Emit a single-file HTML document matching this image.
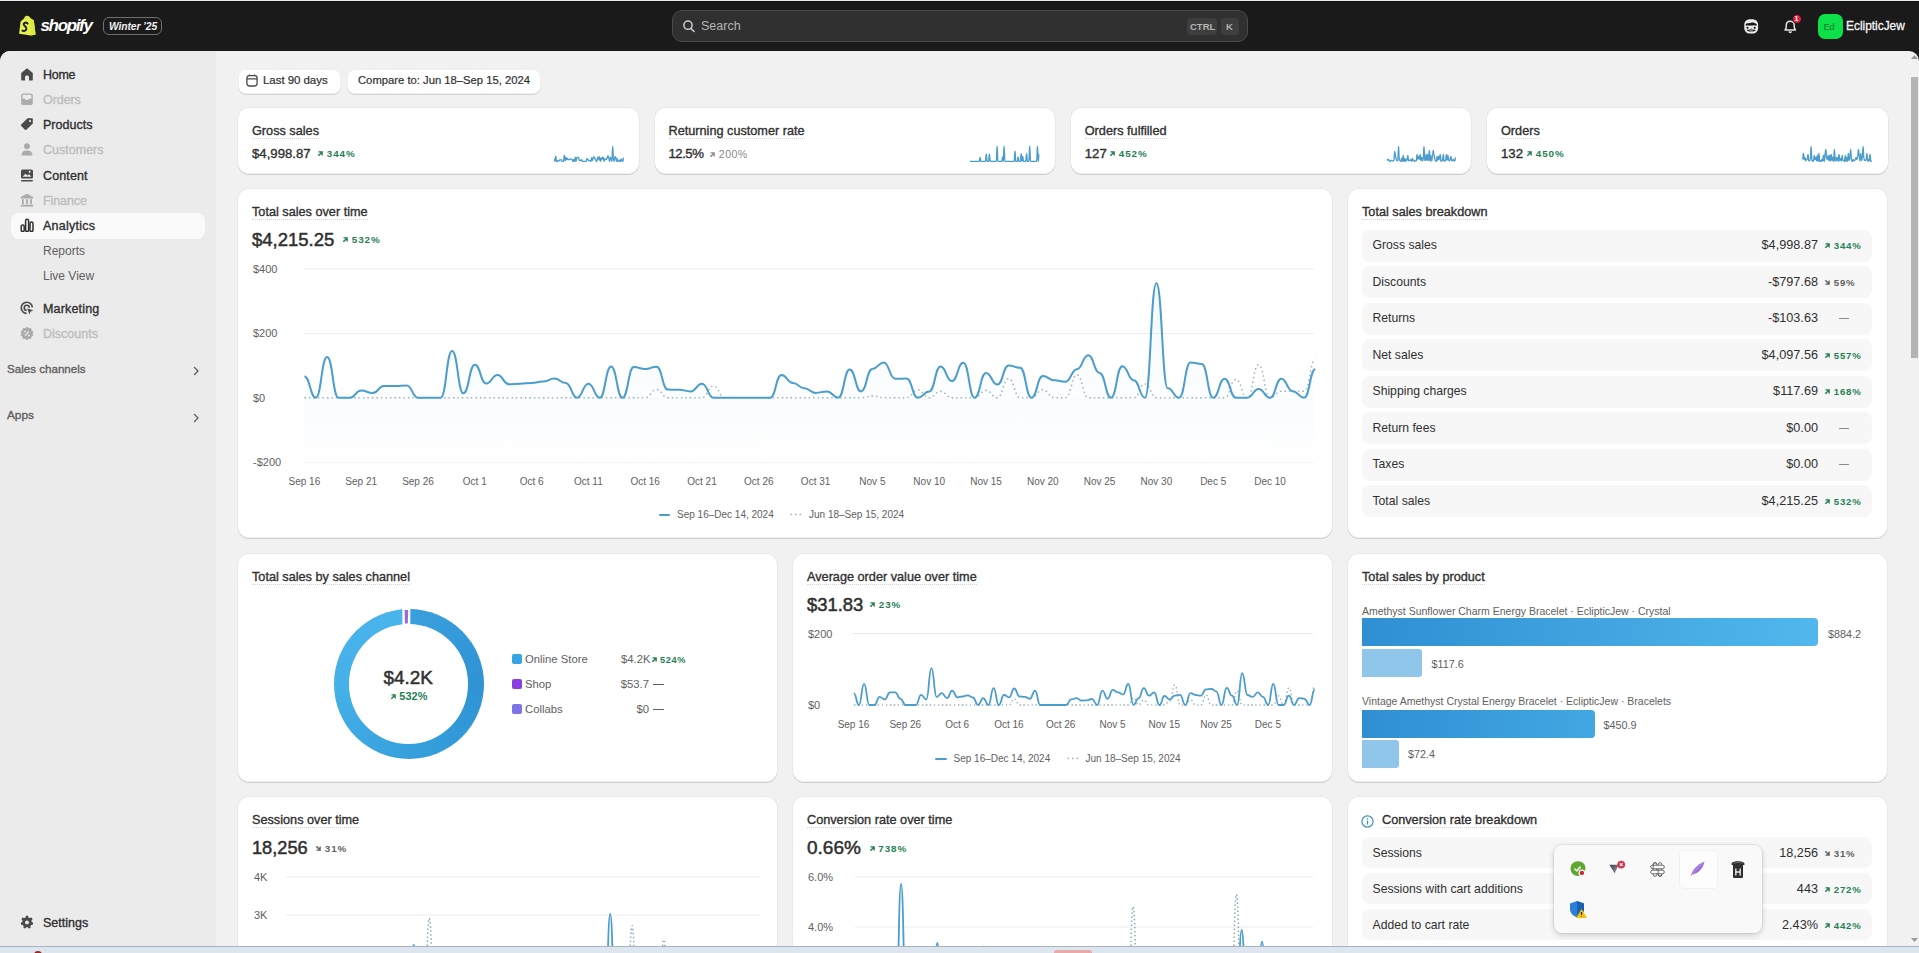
<!DOCTYPE html><html><head><meta charset="utf-8"><style>
*{margin:0;padding:0;box-sizing:border-box}
html,body{width:1919px;height:953px;overflow:hidden;background:#1a1a1a;font-family:"Liberation Sans",sans-serif;color:#303030}
.t{position:absolute;white-space:nowrap}
.abs{position:absolute}
.card{position:absolute;background:#fff;border-radius:11px;box-shadow:0 1px 0 0 rgba(26,26,26,0.12),inset 0 -1px 0 0 rgba(0,0,0,0.05),0 0 0 1px rgba(0,0,0,0.035)}
.ttl{position:absolute;white-space:nowrap;font-weight:400;font-size:12.7px;-webkit-text-stroke:0.35px #303030;color:#303030;line-height:13px;margin-top:2.5px;border-bottom:1px dotted #d4d4d4;padding-bottom:0px}
.row{position:absolute;background:#f7f7f7;border-radius:8px}
</style></head><body>

<div class="abs" style="left:0;top:0;width:1919px;height:1px;background:#eeecf0"></div>
<div class="abs" style="left:0;top:1px;width:1919px;height:1px;background:#111014"></div>
<div class="abs" style="left:0;top:2px;width:1919px;height:49px;background:#1a1a1a"></div>
<svg class="abs" style="left:0;top:0" width="40" height="40" viewBox="0 0 40 40">
<path d="M19.1 33.8 L20.6 21.4 L23.8 18.8 C24.6 16.8 25.6 15.8 26.8 15.8 C28.4 15.8 29.6 16.6 30.3 17.9 L33.8 20.5 L35.6 34.4 L30.9 35.4 Z" fill="#e6f050"/>
<path d="M30.3 17.9 L33.8 20.5 L35.6 34.4 L30.9 35.4 Z" fill="#dbe83e"/>
<path d="M27.6 23.6 C27 22.6 25.6 22.3 24.6 22.8 C23.4 23.4 23.4 24.8 24.4 25.6 C25.4 26.4 26.6 27 26.4 28.8 C26.2 30.6 24.2 31.4 22.4 30.6" stroke="#1a1a1a" stroke-width="1.9" fill="none" stroke-linecap="round"/>
<path d="M25 18.6 C25.6 17.4 26.6 17.2 27.6 17.8" stroke="#b9c632" stroke-width="0.8" fill="none"/>
</svg>
<div class="t" style="left:40.5px;top:15.3px;font-size:17px;font-weight:700;color:#fff;line-height:22px;font-style:italic;letter-spacing:-1.35px">shopify</div>
<div class="abs" style="left:103px;top:17px;width:59px;height:18px;border:1px solid #6f6f6f;border-radius:6px"></div>
<div class="t" style="left:109px;top:19.0px;font-size:10.3px;font-weight:700;color:#f0f0f0;line-height:16px;font-style:italic;letter-spacing:-0.1px">Winter ’25</div>
<div class="abs" style="left:672px;top:10px;width:576px;height:32px;background:#303030;border:1px solid #4a4a4a;border-radius:10px"></div>
<svg class="abs" style="left:683px;top:20px" width="12" height="13" viewBox="0 0 12 13"><circle cx="5" cy="5.2" r="4.1" stroke="#cfcfcf" stroke-width="1.5" fill="none"/><path d="M8 8.4 L11 11.5" stroke="#cfcfcf" stroke-width="1.5" stroke-linecap="round"/></svg>
<div class="t" style="left:701px;top:18.0px;font-size:12.5px;font-weight:400;color:#b5b5b5;line-height:16px;">Search</div>
<div class="abs" style="left:1187px;top:18px;width:30px;height:17px;background:#3e3e3e;border-radius:4px"></div>
<div class="t" style="left:1190px;top:18.5px;font-size:9.5px;font-weight:700;color:#b5b5b5;line-height:16px;">CTRL</div>
<div class="abs" style="left:1221px;top:18px;width:18px;height:17px;background:#3e3e3e;border-radius:4px"></div>
<div class="t" style="left:1226px;top:18.5px;font-size:9.5px;font-weight:700;color:#b5b5b5;line-height:16px;">K</div>
<svg class="abs" style="left:1744px;top:18.5px" width="15" height="15" viewBox="0 0 15 15">
<rect x="0.3" y="0.3" width="13.8" height="14.2" rx="5.2" fill="#ededed"/>
<path d="M1.6 5.2 C3.6 3.6 5.4 4.6 7.2 3.8 C9 3.2 10.8 4 12.8 5.2 L12.6 6.8 C10.6 5.8 9 6.2 7.2 6.6 C5.4 7 3.6 6 1.8 6.8 Z" fill="#1a1a1a"/>
<circle cx="3.5" cy="8.8" r="1.1" fill="#1a1a1a"/><circle cx="10.7" cy="8.8" r="1.1" fill="#1a1a1a"/>
<path d="M6.4 10.2 L7.2 9.2 L8 10.2 Z" fill="#1a1a1a"/>
<path d="M2.6 11.2 C4.6 10.4 9.8 10.4 11.8 11.2 C10.8 13 3.6 13 2.6 11.2 Z" fill="#1a1a1a"/>
<path d="M5.2 11.6 C6.4 11.3 8 11.3 9.2 11.6 C8.4 12.3 6 12.3 5.2 11.6 Z" fill="#ededed"/>
</svg>
<svg class="abs" style="left:1782px;top:17px" width="17" height="17" viewBox="0 0 17 17">
<path d="M3 13 H13.5 C12.6 12 12.2 11 12.2 9.2 V8.2 C12.2 5.8 10.6 4.2 8.2 4.2 C5.8 4.2 4.3 5.8 4.3 8.2 V9.2 C4.3 11 3.9 12 3 13 Z" stroke="#e3e3e3" stroke-width="1.5" fill="none" stroke-linejoin="round"/>
<path d="M6.8 14.6 Q8.2 16.2 9.6 14.6" stroke="#e3e3e3" stroke-width="1.5" fill="none"/></svg>
<div class="abs" style="left:1792px;top:14px;width:10px;height:10px;background:#e51c3e;border-radius:50%;border:1px solid #1a1a1a"></div>
<div class="t" style="left:1794.5px;top:14.0px;font-size:7px;font-weight:700;color:#fff;line-height:10px;">1</div>
<div class="abs" style="left:1818px;top:14px;width:25px;height:25px;background:#0ee04a;border-radius:7px"></div>
<div class="t" style="left:1823.5px;top:20.5px;font-size:9px;font-weight:400;color:#0b7a2c;line-height:12px;">Ed</div>
<div class="t" style="left:1846px;top:18.0px;font-size:11.9px;font-weight:400;color:#f3f3f3;line-height:16px;-webkit-text-stroke:0.3px #f3f3f3;">EclipticJew</div>
<div class="abs" style="left:0;top:51px;width:1919px;height:895px;background:#f1f1f1;border-radius:10px 10px 0 0;overflow:hidden">
<div class="abs" style="left:0;top:0;width:216px;height:895px;background:#ebebeb"></div>
</div>
<div class="abs" style="left:11px;top:213px;width:194px;height:26px;background:#fafafa;border-radius:8px"></div>
<svg class="abs" style="left:20px;top:67.0px" width="14" height="14" viewBox="0 0 14 14"><path d="M7 1.2 L12.8 6 V12.6 C12.8 13.2 12.4 13.6 11.8 13.6 H9 V10 C9 9 8.2 8.4 7 8.4 C5.8 8.4 5 9 5 10 V13.6 H2.2 C1.6 13.6 1.2 13.2 1.2 12.6 V6 Z" fill="#4a4a4a"/></svg>
<div class="t" style="left:43px;top:66.9px;font-size:12.5px;font-weight:400;color:#303030;line-height:16px;-webkit-text-stroke:0.35px #303030;letter-spacing:-0.26px">Home</div>
<svg class="abs" style="left:20px;top:92.0px" width="14" height="14" viewBox="0 0 14 14"><rect x="1.2" y="1.5" width="11.6" height="11.6" rx="2.2" fill="#ababab"/><path d="M2.6 6.8 H5 L6 8 H8 L9 6.8 H11.4 V3.6 C11.4 3.1 11 2.8 10.6 2.8 H3.4 C3 2.8 2.6 3.1 2.6 3.6 Z" fill="#ebebeb"/></svg>
<div class="t" style="left:43px;top:91.9px;font-size:12.5px;font-weight:400;color:#bdbdbd;line-height:16px;-webkit-text-stroke:0.35px #bdbdbd;letter-spacing:-0.07px">Orders</div>
<svg class="abs" style="left:20px;top:117.0px" width="14" height="14" viewBox="0 0 14 14"><path d="M7.6 1.2 H12 C12.5 1.2 12.8 1.5 12.8 2 V6.4 L6.4 12.8 C6 13.2 5.4 13.2 5 12.8 L1.2 9 C0.8 8.6 0.8 8 1.2 7.6 Z" fill="#4a4a4a"/><circle cx="10" cy="4" r="1.1" fill="#ebebeb"/></svg>
<div class="t" style="left:43px;top:116.9px;font-size:12.5px;font-weight:400;color:#303030;line-height:16px;-webkit-text-stroke:0.35px #303030;letter-spacing:0.02px">Products</div>
<svg class="abs" style="left:20px;top:142.0px" width="14" height="14" viewBox="0 0 14 14"><circle cx="7" cy="4.2" r="3" fill="#ababab"/><path d="M1.6 13.4 C1.6 9.8 4 8.6 7 8.6 C10 8.6 12.4 9.8 12.4 13.4 Z" fill="#ababab"/></svg>
<div class="t" style="left:43px;top:141.9px;font-size:12.5px;font-weight:400;color:#bdbdbd;line-height:16px;-webkit-text-stroke:0.35px #bdbdbd;letter-spacing:0.01px">Customers</div>
<svg class="abs" style="left:20px;top:168.0px" width="14" height="14" viewBox="0 0 14 14"><rect x="1" y="1.5" width="12" height="9" rx="1.6" fill="#4a4a4a"/><path d="M2.6 8.8 L5.4 5.8 L7.4 7.6 L9 6.2 L11.4 8.8 Z" fill="#ebebeb"/><circle cx="9.6" cy="3.8" r="1" fill="#ebebeb"/><rect x="1" y="12" width="12" height="1.6" rx="0.8" fill="#4a4a4a"/></svg>
<div class="t" style="left:43px;top:167.9px;font-size:12.5px;font-weight:400;color:#303030;line-height:16px;-webkit-text-stroke:0.35px #303030;letter-spacing:0.12px">Content</div>
<svg class="abs" style="left:20px;top:193.0px" width="14" height="14" viewBox="0 0 14 14"><path d="M7 0.8 L13.2 4 V5.4 H0.8 V4 Z" fill="#ababab"/><rect x="2" y="6.2" width="1.8" height="5" fill="#ababab"/><rect x="6.1" y="6.2" width="1.8" height="5" fill="#ababab"/><rect x="10.2" y="6.2" width="1.8" height="5" fill="#ababab"/><rect x="0.8" y="11.8" width="12.4" height="1.8" fill="#ababab"/></svg>
<div class="t" style="left:43px;top:192.9px;font-size:12.5px;font-weight:400;color:#bdbdbd;line-height:16px;-webkit-text-stroke:0.35px #bdbdbd;letter-spacing:-0.1px">Finance</div>
<svg class="abs" style="left:20px;top:218.0px" width="14" height="14" viewBox="0 0 14 14"><rect x="1.2" y="7" width="3" height="6.6" rx="1.5" stroke="#303030" stroke-width="1.5" fill="none"/><rect x="5.6" y="1.2" width="3" height="12.4" rx="1.5" stroke="#303030" stroke-width="1.5" fill="none"/><rect x="10" y="4" width="3" height="9.6" rx="1.5" stroke="#303030" stroke-width="1.5" fill="none"/></svg>
<div class="t" style="left:43px;top:217.9px;font-size:12.5px;font-weight:400;color:#303030;line-height:16px;-webkit-text-stroke:0.35px #303030;letter-spacing:0.26px">Analytics</div>
<div class="t" style="left:43px;top:242.5px;font-size:12px;font-weight:400;color:#616161;line-height:16px;">Reports</div>
<div class="t" style="left:43px;top:267.5px;font-size:12px;font-weight:400;color:#616161;line-height:16px;">Live View</div>
<svg class="abs" style="left:20px;top:301.0px" width="14" height="14" viewBox="0 0 14 14"><path d="M12.4 6.4 A5.6 5.6 0 1 0 6.6 12.4" stroke="#4a4a4a" stroke-width="1.6" fill="none"/><path d="M9.4 6.6 A2.6 2.6 0 1 0 6.6 9.4" stroke="#4a4a4a" stroke-width="1.6" fill="none"/><path d="M7.2 7.2 L13.4 9.4 L10.6 10.6 L9.4 13.4 Z" fill="#4a4a4a"/></svg>
<div class="t" style="left:43px;top:301.2px;font-size:12.5px;font-weight:400;color:#303030;line-height:16px;-webkit-text-stroke:0.35px #303030;letter-spacing:0.17px">Marketing</div>
<svg class="abs" style="left:20px;top:326.0px" width="14" height="14" viewBox="0 0 14 14"><path d="M7 0.8 L8.8 2.2 L11 2 L11.6 4.2 L13.4 5.6 L12.6 7.6 L13.4 9.6 L11.6 10.8 L11 13 L8.8 12.8 L7 14.2 L5.2 12.8 L3 13 L2.4 10.8 L0.6 9.6 L1.4 7.6 L0.6 5.6 L2.4 4.2 L3 2 L5.2 2.2 Z" fill="#ababab"/><path d="M5 9.6 L9 5.4" stroke="#ebebeb" stroke-width="1.3"/><circle cx="5.2" cy="5.6" r="0.9" fill="#ebebeb"/><circle cx="8.8" cy="9.4" r="0.9" fill="#ebebeb"/></svg>
<div class="t" style="left:43px;top:326.2px;font-size:12.5px;font-weight:400;color:#bdbdbd;line-height:16px;-webkit-text-stroke:0.35px #bdbdbd;">Discounts</div>
<div class="t" style="left:7px;top:361.0px;font-size:11.6px;font-weight:400;color:#616161;line-height:16px;-webkit-text-stroke:0.35px #616161;">Sales channels</div>
<div class="t" style="left:7px;top:407.0px;font-size:11.8px;font-weight:400;color:#616161;line-height:16px;-webkit-text-stroke:0.35px #616161;">Apps</div>
<svg class="abs" style="left:192px;top:366px" width="8" height="10" viewBox="0 0 8 10"><path d="M2.5 1.5 L6 5 L2.5 8.5" stroke="#616161" stroke-width="1.4" fill="none" stroke-linecap="round" stroke-linejoin="round"/></svg>
<svg class="abs" style="left:192px;top:413px" width="8" height="10" viewBox="0 0 8 10"><path d="M2.5 1.5 L6 5 L2.5 8.5" stroke="#616161" stroke-width="1.4" fill="none" stroke-linecap="round" stroke-linejoin="round"/></svg>
<svg class="abs" style="left:20px;top:915.0px" width="14" height="14" viewBox="0 0 14 14"><path d="M6 0.8 H8 L8.4 2.4 L9.8 3.1 L11.4 2.5 L12.6 4.2 L11.5 5.5 L11.6 7 L13.2 7.8 L12.8 9.8 L11.2 10 L10.3 11.2 L10.6 12.9 L8.8 13.6 L7.8 12.3 H6.2 L5.2 13.6 L3.4 12.9 L3.7 11.2 L2.8 10 L1.2 9.8 L0.8 7.8 L2.4 7 L2.5 5.5 L1.4 4.2 L2.6 2.5 L4.2 3.1 L5.6 2.4 Z" fill="#4a4a4a"/><circle cx="7" cy="7.4" r="1.9" fill="#ebebeb"/></svg>
<div class="t" style="left:43px;top:915.2px;font-size:12.5px;font-weight:400;color:#303030;line-height:16px;-webkit-text-stroke:0.35px #303030;">Settings</div>
<div class="abs" style="left:238px;top:69px;width:102.5px;height:25px;background:#fff;border-radius:8px;box-shadow:0 1px 0 0 rgba(0,0,0,0.12), inset 0 0 0 1px rgba(0,0,0,0.06)"></div>
<svg class="abs" style="left:246px;top:74px" width="12" height="13" viewBox="0 0 12 13"><rect x="0.9" y="1.6" width="10.2" height="10.4" rx="2.4" stroke="#4a4a4a" stroke-width="1.3" fill="none"/><path d="M1 4.8 H11 M3.4 0.6 V2 M8.6 0.6 V2" stroke="#4a4a4a" stroke-width="1.3"/></svg>
<div class="t" style="left:263px;top:71.8px;font-size:11.5px;font-weight:400;color:#303030;line-height:16px;-webkit-text-stroke:0.2px #303030;letter-spacing:-0.05px">Last 90 days</div>
<div class="abs" style="left:347.2px;top:69px;width:193.5px;height:25px;background:#fff;border-radius:8px;box-shadow:0 1px 0 0 rgba(0,0,0,0.12), inset 0 0 0 1px rgba(0,0,0,0.06)"></div>
<div class="t" style="left:358px;top:71.8px;font-size:11.25px;font-weight:400;color:#303030;line-height:16px;-webkit-text-stroke:0.2px #303030;">Compare to: Jun 18–Sep 15, 2024</div>
<div class="card" style="left:238px;top:108px;width:400.5px;height:66px"></div>
<div class="ttl" style="left:252px;top:122px">Gross sales</div>
<div class="t" style="left:252px;top:145.5px;font-size:13.2px;font-weight:400;color:#303030;line-height:16px;-webkit-text-stroke:0.35px #303030;">$4,998.87</div>
<div class="card" style="left:654.5px;top:108px;width:400.5px;height:66px"></div>
<div class="ttl" style="left:668.5px;top:122px">Returning customer rate</div>
<div class="t" style="left:668.5px;top:145.5px;font-size:13.2px;font-weight:400;color:#303030;line-height:16px;-webkit-text-stroke:0.35px #303030;letter-spacing:-0.5px">12.5%</div>
<div class="card" style="left:1070.75px;top:108px;width:400.5px;height:66px"></div>
<div class="ttl" style="left:1084.75px;top:122px">Orders fulfilled</div>
<div class="t" style="left:1084.75px;top:145.5px;font-size:13.2px;font-weight:400;color:#303030;line-height:16px;-webkit-text-stroke:0.35px #303030;">127</div>
<div class="card" style="left:1487px;top:108px;width:400.5px;height:66px"></div>
<div class="ttl" style="left:1501px;top:122px">Orders</div>
<div class="t" style="left:1501px;top:145.5px;font-size:13.2px;font-weight:400;color:#303030;line-height:16px;-webkit-text-stroke:0.35px #303030;">132</div>
<div class="t" style="left:318px;top:146.1px;font-size:9.8px;font-weight:700;color:#1f7f52;line-height:16px;letter-spacing:0.95px"><svg width="5" height="5" viewBox="0 0 5 5" style="margin-right:3.8px;vertical-align:1px"><path d="M0.8 4.3 L3.9 1.2 M1.2 0.9 H4.1 V3.8" stroke="currentColor" stroke-width="1.4" fill="none" stroke-linecap="square"/></svg>344%</div>
<div class="t" style="left:710px;top:146.3px;font-size:10.6px;font-weight:400;color:#8a8a8a;line-height:16px;letter-spacing:0.45px"><svg width="5" height="5" viewBox="0 0 5 5" style="margin-right:3.8px;vertical-align:1px"><path d="M0.8 4.3 L3.9 1.2 M1.2 0.9 H4.1 V3.8" stroke="currentColor" stroke-width="1.4" fill="none" stroke-linecap="square"/></svg>200%</div>
<div class="t" style="left:1110px;top:146.1px;font-size:9.8px;font-weight:700;color:#1f7f52;line-height:16px;letter-spacing:0.95px"><svg width="5" height="5" viewBox="0 0 5 5" style="margin-right:3.8px;vertical-align:1px"><path d="M0.8 4.3 L3.9 1.2 M1.2 0.9 H4.1 V3.8" stroke="currentColor" stroke-width="1.4" fill="none" stroke-linecap="square"/></svg>452%</div>
<div class="t" style="left:1527px;top:146.1px;font-size:9.8px;font-weight:700;color:#1f7f52;line-height:16px;letter-spacing:0.95px"><svg width="5" height="5" viewBox="0 0 5 5" style="margin-right:3.8px;vertical-align:1px"><path d="M0.8 4.3 L3.9 1.2 M1.2 0.9 H4.1 V3.8" stroke="currentColor" stroke-width="1.4" fill="none" stroke-linecap="square"/></svg>450%</div>
<svg class="abs" style="left:0;top:0;overflow:visible" width="1" height="1"><path d="M554.2,158.6C554.6,158.6 554.6,161.4 555.0,161.4C555.4,161.4 555.4,156.1 555.8,156.1C556.1,156.1 556.1,161.4 556.5,161.4C556.9,161.4 556.9,161.4 557.3,161.4C557.7,161.4 557.7,160.5 558.1,160.5C558.5,160.5 558.5,160.8 558.9,160.8C559.3,160.8 559.3,159.9 559.7,159.9C560.0,159.9 560.0,159.9 560.4,159.9C560.8,159.9 560.8,159.8 561.2,159.8C561.6,159.8 561.6,161.4 562.0,161.4C562.4,161.4 562.4,161.4 562.8,161.4C563.2,161.4 563.2,161.4 563.6,161.4C563.9,161.4 563.9,155.3 564.3,155.3C564.7,155.3 564.7,160.8 565.1,160.8C565.5,160.8 565.5,157.1 565.9,157.1C566.3,157.1 566.3,159.5 566.7,159.5C567.1,159.5 567.1,158.4 567.5,158.4C567.8,158.4 567.8,159.6 568.2,159.6C568.6,159.6 568.6,159.6 569.0,159.6C569.4,159.6 569.4,159.5 569.8,159.5C570.2,159.5 570.2,159.3 570.6,159.3C571.0,159.3 571.0,158.9 571.4,158.9C571.7,158.9 571.7,159.5 572.1,159.5C572.5,159.5 572.5,161.4 572.9,161.4C573.3,161.4 573.3,159.6 573.7,159.6C574.1,159.6 574.1,161.4 574.5,161.4C574.9,161.4 574.9,157.3 575.3,157.3C575.6,157.3 575.6,161.4 576.0,161.4C576.4,161.4 576.4,157.4 576.8,157.4C577.2,157.4 577.2,157.6 577.6,157.6C578.0,157.6 578.0,157.4 578.4,157.4C578.8,157.4 578.8,160.3 579.2,160.3C579.5,160.3 579.5,160.4 579.9,160.4C580.3,160.4 580.3,160.6 580.7,160.6C581.1,160.6 581.1,159.6 581.5,159.6C581.9,159.6 581.9,161.4 582.3,161.4C582.7,161.4 582.7,161.4 583.1,161.4C583.4,161.4 583.4,161.4 583.8,161.4C584.2,161.4 584.2,161.4 584.6,161.4C585.0,161.4 585.0,161.4 585.4,161.4C585.8,161.4 585.8,161.4 586.2,161.4C586.6,161.4 586.6,158.4 587.0,158.4C587.3,158.4 587.3,159.5 587.7,159.5C588.1,159.5 588.1,160.2 588.5,160.2C588.9,160.2 588.9,160.8 589.3,160.8C589.7,160.8 589.7,160.6 590.1,160.6C590.5,160.6 590.5,161.4 590.8,161.4C591.2,161.4 591.2,157.7 591.6,157.7C592.0,157.7 592.0,160.6 592.4,160.6C592.8,160.6 592.8,157.6 593.2,157.6C593.6,157.6 593.6,156.8 594.0,156.8C594.4,156.8 594.4,158.9 594.7,158.9C595.1,158.9 595.1,158.9 595.5,158.9C595.9,158.9 595.9,161.4 596.3,161.4C596.7,161.4 596.7,160.6 597.1,160.6C597.5,160.6 597.5,157.3 597.9,157.3C598.3,157.3 598.3,159.2 598.6,159.2C599.0,159.2 599.0,156.8 599.4,156.8C599.8,156.8 599.8,161.4 600.2,161.4C600.6,161.4 600.6,158.2 601.0,158.2C601.4,158.2 601.4,159.7 601.8,159.7C602.2,159.7 602.2,157.2 602.5,157.2C602.9,157.2 602.9,157.5 603.3,157.5C603.7,157.5 603.7,161.4 604.1,161.4C604.5,161.4 604.5,158.6 604.9,158.6C605.3,158.6 605.3,159.1 605.7,159.1C606.1,159.1 606.1,159.3 606.4,159.3C606.8,159.3 606.8,157.7 607.2,157.7C607.6,157.7 607.6,155.8 608.0,155.8C608.4,155.8 608.4,158.2 608.8,158.2C609.2,158.2 609.2,161.4 609.6,161.4C610.0,161.4 610.0,157.3 610.3,157.3C610.7,157.3 610.7,159.1 611.1,159.1C611.5,159.1 611.5,161.4 611.9,161.4C612.3,161.4 612.3,146.4 612.7,146.4C613.1,146.4 613.1,160.2 613.5,160.2C613.9,160.2 613.9,161.4 614.2,161.4C614.6,161.4 614.6,156.8 615.0,156.8C615.4,156.8 615.4,157.0 615.8,157.0C616.2,157.0 616.2,161.4 616.6,161.4C617.0,161.4 617.0,158.9 617.4,158.9C617.8,158.9 617.8,161.4 618.1,161.4C618.5,161.4 618.5,161.4 618.9,161.4C619.3,161.4 619.3,160.3 619.7,160.3C620.1,160.3 620.1,161.4 620.5,161.4C620.9,161.4 620.9,158.9 621.3,158.9C621.7,158.9 621.7,160.5 622.0,160.5C622.4,160.5 622.4,161.4 622.8,161.4C623.2,161.4 623.2,157.7 623.6,157.7" stroke="#4b9dcd" stroke-width="1.4" fill="none"/></svg>
<svg class="abs" style="left:0;top:0;overflow:visible" width="1" height="1"><path d="M970.0,161.4C970.4,161.4 970.4,161.4 970.8,161.4C971.2,161.4 971.2,161.4 971.6,161.4C971.9,161.4 971.9,161.4 972.3,161.4C972.7,161.4 972.7,161.4 973.1,161.4C973.5,161.4 973.5,161.4 973.9,161.4C974.3,161.4 974.3,161.4 974.7,161.4C975.0,161.4 975.0,161.4 975.4,161.4C975.8,161.4 975.8,161.4 976.2,161.4C976.6,161.4 976.6,161.4 977.0,161.4C977.4,161.4 977.4,161.4 977.8,161.4C978.1,161.4 978.1,161.4 978.5,161.4C978.9,161.4 978.9,161.4 979.3,161.4C979.7,161.4 979.7,157.4 980.1,157.4C980.5,157.4 980.5,161.4 980.9,161.4C981.2,161.4 981.2,161.4 981.6,161.4C982.0,161.4 982.0,161.4 982.4,161.4C982.8,161.4 982.8,161.4 983.2,161.4C983.6,161.4 983.6,161.4 984.0,161.4C984.3,161.4 984.3,161.4 984.7,161.4C985.1,161.4 985.1,161.4 985.5,161.4C985.9,161.4 985.9,154.1 986.3,154.1C986.7,154.1 986.7,161.4 987.1,161.4C987.4,161.4 987.4,161.4 987.8,161.4C988.2,161.4 988.2,161.4 988.6,161.4C989.0,161.4 989.0,154.1 989.4,154.1C989.8,154.1 989.8,161.4 990.2,161.4C990.5,161.4 990.5,161.4 990.9,161.4C991.3,161.4 991.3,161.4 991.7,161.4C992.1,161.4 992.1,161.4 992.5,161.4C992.9,161.4 992.9,161.4 993.3,161.4C993.6,161.4 993.6,161.4 994.0,161.4C994.4,161.4 994.4,161.4 994.8,161.4C995.2,161.4 995.2,161.4 995.6,161.4C996.0,161.4 996.0,161.4 996.4,161.4C996.7,161.4 996.7,146.1 997.1,146.1C997.5,146.1 997.5,161.4 997.9,161.4C998.3,161.4 998.3,161.4 998.7,161.4C999.1,161.4 999.1,161.4 999.5,161.4C999.8,161.4 999.8,161.4 1000.2,161.4C1000.6,161.4 1000.6,161.4 1001.0,161.4C1001.4,161.4 1001.4,161.4 1001.8,161.4C1002.2,161.4 1002.2,156.9 1002.6,156.9C1002.9,156.9 1002.9,161.4 1003.3,161.4C1003.7,161.4 1003.7,146.1 1004.1,146.1C1004.5,146.1 1004.5,161.4 1004.9,161.4C1005.3,161.4 1005.3,161.4 1005.7,161.4C1006.1,161.4 1006.1,161.4 1006.4,161.4C1006.8,161.4 1006.8,161.4 1007.2,161.4C1007.6,161.4 1007.6,161.4 1008.0,161.4C1008.4,161.4 1008.4,161.4 1008.8,161.4C1009.2,161.4 1009.2,161.4 1009.5,161.4C1009.9,161.4 1009.9,161.4 1010.3,161.4C1010.7,161.4 1010.7,161.4 1011.1,161.4C1011.5,161.4 1011.5,161.4 1011.9,161.4C1012.3,161.4 1012.3,161.4 1012.6,161.4C1013.0,161.4 1013.0,161.4 1013.4,161.4C1013.8,161.4 1013.8,161.4 1014.2,161.4C1014.6,161.4 1014.6,151.3 1015.0,151.3C1015.4,151.3 1015.4,161.4 1015.7,161.4C1016.1,161.4 1016.1,161.4 1016.5,161.4C1016.9,161.4 1016.9,161.4 1017.3,161.4C1017.7,161.4 1017.7,156.9 1018.1,156.9C1018.5,156.9 1018.5,161.4 1018.8,161.4C1019.2,161.4 1019.2,161.4 1019.6,161.4C1020.0,161.4 1020.0,161.4 1020.4,161.4C1020.8,161.4 1020.8,153.7 1021.2,153.7C1021.6,153.7 1021.6,161.4 1021.9,161.4C1022.3,161.4 1022.3,156.5 1022.7,156.5C1023.1,156.5 1023.1,161.4 1023.5,161.4C1023.9,161.4 1023.9,161.4 1024.3,161.4C1024.7,161.4 1024.7,161.4 1025.0,161.4C1025.4,161.4 1025.4,161.4 1025.8,161.4C1026.2,161.4 1026.2,153.7 1026.6,153.7C1027.0,153.7 1027.0,161.4 1027.4,161.4C1027.8,161.4 1027.8,161.4 1028.1,161.4C1028.5,161.4 1028.5,161.4 1028.9,161.4C1029.3,161.4 1029.3,146.1 1029.7,146.1C1030.1,146.1 1030.1,161.4 1030.5,161.4C1030.9,161.4 1030.9,161.4 1031.2,161.4C1031.6,161.4 1031.6,161.4 1032.0,161.4C1032.4,161.4 1032.4,161.4 1032.8,161.4C1033.2,161.4 1033.2,161.4 1033.6,161.4C1034.0,161.4 1034.0,161.4 1034.3,161.4C1034.7,161.4 1034.7,161.4 1035.1,161.4C1035.5,161.4 1035.5,161.4 1035.9,161.4C1036.3,161.4 1036.3,161.4 1036.7,161.4C1037.1,161.4 1037.1,146.1 1037.4,146.1C1037.8,146.1 1037.8,161.4 1038.2,161.4C1038.6,161.4 1038.6,154.1 1039.0,154.1" stroke="#4b9dcd" stroke-width="1.4" fill="none"/></svg>
<svg class="abs" style="left:0;top:0;overflow:visible" width="1" height="1"><path d="M1387.0,160.4C1387.4,160.4 1387.4,159.4 1387.8,159.4C1388.2,159.4 1388.2,159.4 1388.5,159.4C1388.9,159.4 1388.9,160.9 1389.3,160.9C1389.7,160.9 1389.7,161.4 1390.1,161.4C1390.5,161.4 1390.5,160.4 1390.9,160.4C1391.2,160.4 1391.2,160.4 1391.6,160.4C1392.0,160.4 1392.0,160.9 1392.4,160.9C1392.8,160.9 1392.8,160.9 1393.2,160.9C1393.6,160.9 1393.6,160.9 1393.9,160.9C1394.3,160.9 1394.3,151.4 1394.7,151.4C1395.1,151.4 1395.1,155.4 1395.5,155.4C1395.9,155.4 1395.9,159.4 1396.2,159.4C1396.6,159.4 1396.6,160.4 1397.0,160.4C1397.4,160.4 1397.4,160.9 1397.8,160.9C1398.2,160.9 1398.2,146.4 1398.6,146.4C1398.9,146.4 1398.9,159.4 1399.3,159.4C1399.7,159.4 1399.7,160.9 1400.1,160.9C1400.5,160.9 1400.5,161.4 1400.9,161.4C1401.3,161.4 1401.3,158.4 1401.6,158.4C1402.0,158.4 1402.0,161.4 1402.4,161.4C1402.8,161.4 1402.8,155.4 1403.2,155.4C1403.6,155.4 1403.6,161.4 1404.0,161.4C1404.3,161.4 1404.3,158.4 1404.7,158.4C1405.1,158.4 1405.1,161.4 1405.5,161.4C1405.9,161.4 1405.9,159.4 1406.3,159.4C1406.7,159.4 1406.7,160.4 1407.0,160.4C1407.4,160.4 1407.4,155.4 1407.8,155.4C1408.2,155.4 1408.2,160.9 1408.6,160.9C1409.0,160.9 1409.0,160.4 1409.4,160.4C1409.7,160.4 1409.7,160.4 1410.1,160.4C1410.5,160.4 1410.5,159.4 1410.9,159.4C1411.3,159.4 1411.3,161.4 1411.7,161.4C1412.1,161.4 1412.1,158.4 1412.4,158.4C1412.8,158.4 1412.8,160.4 1413.2,160.4C1413.6,160.4 1413.6,160.4 1414.0,160.4C1414.4,160.4 1414.4,161.4 1414.7,161.4C1415.1,161.4 1415.1,160.9 1415.5,160.9C1415.9,160.9 1415.9,160.9 1416.3,160.9C1416.7,160.9 1416.7,154.4 1417.1,154.4C1417.4,154.4 1417.4,159.4 1417.8,159.4C1418.2,159.4 1418.2,156.4 1418.6,156.4C1419.0,156.4 1419.0,159.4 1419.4,159.4C1419.8,159.4 1419.8,154.4 1420.1,154.4C1420.5,154.4 1420.5,160.4 1420.9,160.4C1421.3,160.4 1421.3,157.4 1421.7,157.4C1422.1,157.4 1422.1,160.9 1422.5,160.9C1422.8,160.9 1422.8,159.4 1423.2,159.4C1423.6,159.4 1423.6,146.4 1424.0,146.4C1424.4,146.4 1424.4,160.4 1424.8,160.4C1425.2,160.4 1425.2,160.4 1425.5,160.4C1425.9,160.4 1425.9,154.4 1426.3,154.4C1426.7,154.4 1426.7,160.4 1427.1,160.4C1427.5,160.4 1427.5,154.4 1427.9,154.4C1428.2,154.4 1428.2,160.4 1428.6,160.4C1429.0,160.4 1429.0,150.4 1429.4,150.4C1429.8,150.4 1429.8,161.4 1430.2,161.4C1430.5,161.4 1430.5,155.4 1430.9,155.4C1431.3,155.4 1431.3,160.9 1431.7,160.9C1432.1,160.9 1432.1,156.4 1432.5,156.4C1432.9,156.4 1432.9,150.4 1433.2,150.4C1433.6,150.4 1433.6,154.4 1434.0,154.4C1434.4,154.4 1434.4,159.4 1434.8,159.4C1435.2,159.4 1435.2,160.9 1435.6,160.9C1435.9,160.9 1435.9,161.4 1436.3,161.4C1436.7,161.4 1436.7,156.4 1437.1,156.4C1437.5,156.4 1437.5,160.4 1437.9,160.4C1438.3,160.4 1438.3,156.4 1438.6,156.4C1439.0,156.4 1439.0,159.4 1439.4,159.4C1439.8,159.4 1439.8,154.4 1440.2,154.4C1440.6,154.4 1440.6,161.4 1441.0,161.4C1441.3,161.4 1441.3,160.4 1441.7,160.4C1442.1,160.4 1442.1,160.4 1442.5,160.4C1442.9,160.4 1442.9,154.4 1443.3,154.4C1443.7,154.4 1443.7,161.4 1444.0,161.4C1444.4,161.4 1444.4,160.9 1444.8,160.9C1445.2,160.9 1445.2,160.4 1445.6,160.4C1446.0,160.4 1446.0,154.4 1446.4,154.4C1446.7,154.4 1446.7,160.4 1447.1,160.4C1447.5,160.4 1447.5,155.4 1447.9,155.4C1448.3,155.4 1448.3,160.4 1448.7,160.4C1449.0,160.4 1449.0,160.9 1449.4,160.9C1449.8,160.9 1449.8,159.4 1450.2,159.4C1450.6,159.4 1450.6,156.4 1451.0,156.4C1451.4,156.4 1451.4,160.9 1451.7,160.9C1452.1,160.9 1452.1,160.4 1452.5,160.4C1452.9,160.4 1452.9,159.4 1453.3,159.4C1453.7,159.4 1453.7,160.9 1454.1,160.9C1454.4,160.9 1454.4,160.9 1454.8,160.9C1455.2,160.9 1455.2,157.4 1455.6,157.4" stroke="#4b9dcd" stroke-width="1.4" fill="none"/></svg>
<svg class="abs" style="left:0;top:0;overflow:visible" width="1" height="1"><path d="M1802.6,159.4C1803.0,159.4 1803.0,153.4 1803.4,153.4C1803.8,153.4 1803.8,159.4 1804.2,159.4C1804.5,159.4 1804.5,157.4 1804.9,157.4C1805.3,157.4 1805.3,160.9 1805.7,160.9C1806.1,160.9 1806.1,159.4 1806.5,159.4C1806.9,159.4 1806.9,159.4 1807.3,159.4C1807.6,159.4 1807.6,154.4 1808.0,154.4C1808.4,154.4 1808.4,160.9 1808.8,160.9C1809.2,160.9 1809.2,160.4 1809.6,160.4C1810.0,160.4 1810.0,159.4 1810.4,159.4C1810.7,159.4 1810.7,146.4 1811.1,146.4C1811.5,146.4 1811.5,160.9 1811.9,160.9C1812.3,160.9 1812.3,160.4 1812.7,160.4C1813.1,160.4 1813.1,161.4 1813.5,161.4C1813.8,161.4 1813.8,155.4 1814.2,155.4C1814.6,155.4 1814.6,159.4 1815.0,159.4C1815.4,159.4 1815.4,157.4 1815.8,157.4C1816.2,157.4 1816.2,160.9 1816.6,160.9C1816.9,160.9 1816.9,155.4 1817.3,155.4C1817.7,155.4 1817.7,161.4 1818.1,161.4C1818.5,161.4 1818.5,153.4 1818.9,153.4C1819.3,153.4 1819.3,161.4 1819.7,161.4C1820.0,161.4 1820.0,160.4 1820.4,160.4C1820.8,160.4 1820.8,161.4 1821.2,161.4C1821.6,161.4 1821.6,159.4 1822.0,159.4C1822.4,159.4 1822.4,160.9 1822.8,160.9C1823.1,160.9 1823.1,155.4 1823.5,155.4C1823.9,155.4 1823.9,161.4 1824.3,161.4C1824.7,161.4 1824.7,153.4 1825.1,153.4C1825.5,153.4 1825.5,149.4 1825.9,149.4C1826.2,149.4 1826.2,158.4 1826.6,158.4C1827.0,158.4 1827.0,159.4 1827.4,159.4C1827.8,159.4 1827.8,155.4 1828.2,155.4C1828.6,155.4 1828.6,160.9 1829.0,160.9C1829.3,160.9 1829.3,155.4 1829.7,155.4C1830.1,155.4 1830.1,160.9 1830.5,160.9C1830.9,160.9 1830.9,154.4 1831.3,154.4C1831.7,154.4 1831.7,160.4 1832.1,160.4C1832.4,160.4 1832.4,157.4 1832.8,157.4C1833.2,157.4 1833.2,161.4 1833.6,161.4C1834.0,161.4 1834.0,149.4 1834.4,149.4C1834.8,149.4 1834.8,161.4 1835.2,161.4C1835.5,161.4 1835.5,157.4 1835.9,157.4C1836.3,157.4 1836.3,160.4 1836.7,160.4C1837.1,160.4 1837.1,157.4 1837.5,157.4C1837.9,157.4 1837.9,161.4 1838.3,161.4C1838.7,161.4 1838.7,154.4 1839.0,154.4C1839.4,154.4 1839.4,160.4 1839.8,160.4C1840.2,160.4 1840.2,158.4 1840.6,158.4C1841.0,158.4 1841.0,160.9 1841.4,160.9C1841.8,160.9 1841.8,155.4 1842.1,155.4C1842.5,155.4 1842.5,160.4 1842.9,160.4C1843.3,160.4 1843.3,160.4 1843.7,160.4C1844.1,160.4 1844.1,161.4 1844.5,161.4C1844.9,161.4 1844.9,155.4 1845.2,155.4C1845.6,155.4 1845.6,161.4 1846.0,161.4C1846.4,161.4 1846.4,157.4 1846.8,157.4C1847.2,157.4 1847.2,161.4 1847.6,161.4C1848.0,161.4 1848.0,153.4 1848.3,153.4C1848.7,153.4 1848.7,160.4 1849.1,160.4C1849.5,160.4 1849.5,157.4 1849.9,157.4C1850.3,157.4 1850.3,149.4 1850.7,149.4C1851.1,149.4 1851.1,160.4 1851.4,160.4C1851.8,160.4 1851.8,161.4 1852.2,161.4C1852.6,161.4 1852.6,159.4 1853.0,159.4C1853.4,159.4 1853.4,160.9 1853.8,160.9C1854.2,160.9 1854.2,160.4 1854.5,160.4C1854.9,160.4 1854.9,159.4 1855.3,159.4C1855.7,159.4 1855.7,157.4 1856.1,157.4C1856.5,157.4 1856.5,159.4 1856.9,159.4C1857.3,159.4 1857.3,157.4 1857.6,157.4C1858.0,157.4 1858.0,149.4 1858.4,149.4C1858.8,149.4 1858.8,155.4 1859.2,155.4C1859.6,155.4 1859.6,160.9 1860.0,160.9C1860.4,160.9 1860.4,153.4 1860.7,153.4C1861.1,153.4 1861.1,160.4 1861.5,160.4C1861.9,160.4 1861.9,158.4 1862.3,158.4C1862.7,158.4 1862.7,146.4 1863.1,146.4C1863.5,146.4 1863.5,158.4 1863.8,158.4C1864.2,158.4 1864.2,160.4 1864.6,160.4C1865.0,160.4 1865.0,160.4 1865.4,160.4C1865.8,160.4 1865.8,159.4 1866.2,159.4C1866.6,159.4 1866.6,153.4 1866.9,153.4C1867.3,153.4 1867.3,161.4 1867.7,161.4C1868.1,161.4 1868.1,159.4 1868.5,159.4C1868.9,159.4 1868.9,160.9 1869.3,160.9C1869.7,160.9 1869.7,154.4 1870.0,154.4C1870.4,154.4 1870.4,161.4 1870.8,161.4C1871.2,161.4 1871.2,160.4 1871.6,160.4" stroke="#4b9dcd" stroke-width="1.4" fill="none"/></svg>
<div class="card" style="left:238px;top:189px;width:1094px;height:349px"></div>
<div class="ttl" style="left:252px;top:203.5px">Total sales over time</div>
<div class="t" style="left:252px;top:228.7px;font-size:18.5px;font-weight:400;color:#303030;line-height:22px;-webkit-text-stroke:0.5px #303030;">$4,215.25</div>
<div class="t" style="left:343px;top:232.1px;font-size:9.8px;font-weight:700;color:#1f7f52;line-height:16px;letter-spacing:0.95px"><svg width="5" height="5" viewBox="0 0 5 5" style="margin-right:3.8px;vertical-align:1px"><path d="M0.8 4.3 L3.9 1.2 M1.2 0.9 H4.1 V3.8" stroke="currentColor" stroke-width="1.4" fill="none" stroke-linecap="square"/></svg>532%</div>
<svg class="abs" style="left:0;top:0;overflow:visible" width="1919" height="953"><line x1="304" x2="1314" y1="269" y2="269" stroke="#ececec" stroke-width="1"/><line x1="304" x2="1314" y1="333.5" y2="333.5" stroke="#ececec" stroke-width="1"/><line x1="304" x2="1314" y1="462" y2="462" stroke="#ececec" stroke-width="1"/><defs><linearGradient id="bz" x1="0" y1="0" x2="0" y2="1"><stop offset="0" stop-color="#f9fbfd"/><stop offset="1" stop-color="#ffffff"/></linearGradient><linearGradient id="az" x1="0" y1="0" x2="0" y2="1"><stop offset="0" stop-color="#4b9bcc" stop-opacity="0.05"/><stop offset="1" stop-color="#4b9bcc" stop-opacity="0.02"/></linearGradient></defs><rect x="304" y="398" width="1010" height="64" fill="url(#bz)"/><path d="M304.4,376.4C310.1,376.4 310.1,397.7 315.8,397.7C321.4,397.7 321.4,357.0 327.1,357.0C332.8,357.0 332.8,397.7 338.5,397.7C344.2,397.7 344.2,397.7 349.8,397.7C355.5,397.7 355.5,390.5 361.2,390.5C366.9,390.5 366.9,393.0 372.6,393.0C378.2,393.0 378.2,386.0 383.9,386.0C389.6,386.0 389.6,386.0 395.3,386.0C401.0,386.0 401.0,385.6 406.6,385.6C412.3,385.6 412.3,397.7 418.0,397.7C423.7,397.7 423.7,397.7 429.4,397.7C435.0,397.7 435.0,397.7 440.7,397.7C446.4,397.7 446.4,351.0 452.1,351.0C457.8,351.0 457.8,393.3 463.4,393.3C469.1,393.3 469.1,364.7 474.8,364.7C480.5,364.7 480.5,383.5 486.2,383.5C491.8,383.5 491.8,375.0 497.5,375.0C503.2,375.0 503.2,384.2 508.9,384.2C514.6,384.2 514.6,383.7 520.2,383.7C525.9,383.7 525.9,383.0 531.6,383.0C537.3,383.0 537.3,381.6 543.0,381.6C548.6,381.6 548.6,378.6 554.3,378.6C560.0,378.6 560.0,383.0 565.7,383.0C571.4,383.0 571.4,397.7 577.0,397.7C582.7,397.7 582.7,383.7 588.4,383.7C594.1,383.7 594.1,397.7 599.8,397.7C605.4,397.7 605.4,366.6 611.1,366.6C616.8,366.6 616.8,397.7 622.5,397.7C628.2,397.7 628.2,367.0 633.8,367.0C639.5,367.0 639.5,369.0 645.2,369.0C650.9,369.0 650.9,366.8 656.6,366.8C662.2,366.8 662.2,389.6 667.9,389.6C673.6,389.6 673.6,389.8 679.3,389.8C685.0,389.8 685.0,391.4 690.6,391.4C696.3,391.4 696.3,383.7 702.0,383.7C707.7,383.7 707.7,397.7 713.4,397.7C719.0,397.7 719.0,397.7 724.7,397.7C730.4,397.7 730.4,397.7 736.1,397.7C741.8,397.7 741.8,397.7 747.4,397.7C753.1,397.7 753.1,397.7 758.8,397.7C764.5,397.7 764.5,397.7 770.2,397.7C775.8,397.7 775.8,375.0 781.5,375.0C787.2,375.0 787.2,383.0 792.9,383.0C798.6,383.0 798.6,388.2 804.2,388.2C809.9,388.2 809.9,392.9 815.6,392.9C821.3,392.9 821.3,391.4 827.0,391.4C832.6,391.4 832.6,397.7 838.3,397.7C844.0,397.7 844.0,369.4 849.7,369.4C855.4,369.4 855.4,391.4 861.0,391.4C866.7,391.4 866.7,368.9 872.4,368.9C878.1,368.9 878.1,362.4 883.8,362.4C889.4,362.4 889.4,378.8 895.1,378.8C900.8,378.8 900.8,378.6 906.5,378.6C912.2,378.6 912.2,397.7 917.8,397.7C923.5,397.7 923.5,391.4 929.2,391.4C934.9,391.4 934.9,366.6 940.6,366.6C946.2,366.6 946.2,381.1 951.9,381.1C957.6,381.1 957.6,362.8 963.3,362.8C969.0,362.8 969.0,397.7 974.6,397.7C980.3,397.7 980.3,373.0 986.0,373.0C991.7,373.0 991.7,384.6 997.4,384.6C1003.0,384.6 1003.0,365.5 1008.7,365.5C1014.4,365.5 1014.4,367.7 1020.1,367.7C1025.8,367.7 1025.8,397.7 1031.4,397.7C1037.1,397.7 1037.1,376.1 1042.8,376.1C1048.5,376.1 1048.5,380.2 1054.2,380.2C1059.8,380.2 1059.8,381.7 1065.5,381.7C1071.2,381.7 1071.2,369.2 1076.9,369.2C1082.6,369.2 1082.6,355.2 1088.2,355.2C1093.9,355.2 1093.9,372.9 1099.6,372.9C1105.3,372.9 1105.3,397.7 1111.0,397.7C1116.6,397.7 1116.6,366.2 1122.3,366.2C1128.0,366.2 1128.0,380.2 1133.7,380.2C1139.4,380.2 1139.4,397.7 1145.0,397.7C1150.7,397.7 1150.7,283.2 1156.4,283.2C1162.1,283.2 1162.1,388.3 1167.8,388.3C1173.4,388.3 1173.4,397.7 1179.1,397.7C1184.8,397.7 1184.8,362.6 1190.5,362.6C1196.2,362.6 1196.2,364.0 1201.8,364.0C1207.5,364.0 1207.5,397.7 1213.2,397.7C1218.9,397.7 1218.9,378.7 1224.6,378.7C1230.2,378.7 1230.2,397.7 1235.9,397.7C1241.6,397.7 1241.6,397.7 1247.3,397.7C1253.0,397.7 1253.0,389.0 1258.6,389.0C1264.3,389.0 1264.3,397.7 1270.0,397.7C1275.7,397.7 1275.7,378.7 1281.4,378.7C1287.0,378.7 1287.0,391.2 1292.7,391.2C1298.4,391.2 1298.4,397.7 1304.1,397.7C1309.8,397.7 1309.8,369.2 1315.4,369.2 L1315,397.7 L304.4,397.7 Z" fill="url(#az)"/><path d="M304.4,397.7C310.1,397.7 310.1,397.7 315.8,397.7C321.4,397.7 321.4,397.7 327.1,397.7C332.8,397.7 332.8,397.7 338.5,397.7C344.2,397.7 344.2,397.7 349.8,397.7C355.5,397.7 355.5,397.7 361.2,397.7C366.9,397.7 366.9,397.7 372.6,397.7C378.2,397.7 378.2,397.7 383.9,397.7C389.6,397.7 389.6,397.7 395.3,397.7C401.0,397.7 401.0,397.7 406.6,397.7C412.3,397.7 412.3,397.7 418.0,397.7C423.7,397.7 423.7,397.7 429.4,397.7C435.0,397.7 435.0,397.7 440.7,397.7C446.4,397.7 446.4,397.7 452.1,397.7C457.8,397.7 457.8,397.7 463.4,397.7C469.1,397.7 469.1,397.7 474.8,397.7C480.5,397.7 480.5,397.7 486.2,397.7C491.8,397.7 491.8,397.7 497.5,397.7C503.2,397.7 503.2,397.7 508.9,397.7C514.6,397.7 514.6,397.7 520.2,397.7C525.9,397.7 525.9,397.7 531.6,397.7C537.3,397.7 537.3,397.7 543.0,397.7C548.6,397.7 548.6,397.7 554.3,397.7C560.0,397.7 560.0,397.7 565.7,397.7C571.4,397.7 571.4,397.7 577.0,397.7C582.7,397.7 582.7,397.7 588.4,397.7C594.1,397.7 594.1,397.7 599.8,397.7C605.4,397.7 605.4,397.7 611.1,397.7C616.8,397.7 616.8,397.7 622.5,397.7C628.2,397.7 628.2,397.7 633.8,397.7C639.5,397.7 639.5,397.7 645.2,397.7C650.9,397.7 650.9,389.6 656.6,389.6C662.2,389.6 662.2,397.7 667.9,397.7C673.6,397.7 673.6,397.7 679.3,397.7C685.0,397.7 685.0,397.7 690.6,397.7C696.3,397.7 696.3,397.7 702.0,397.7C707.7,397.7 707.7,386.0 713.4,386.0C719.0,386.0 719.0,397.7 724.7,397.7C730.4,397.7 730.4,397.7 736.1,397.7C741.8,397.7 741.8,397.7 747.4,397.7C753.1,397.7 753.1,397.7 758.8,397.7C764.5,397.7 764.5,397.7 770.2,397.7C775.8,397.7 775.8,397.7 781.5,397.7C787.2,397.7 787.2,397.7 792.9,397.7C798.6,397.7 798.6,397.7 804.2,397.7C809.9,397.7 809.9,397.7 815.6,397.7C821.3,397.7 821.3,397.7 827.0,397.7C832.6,397.7 832.6,397.7 838.3,397.7C844.0,397.7 844.0,397.7 849.7,397.7C855.4,397.7 855.4,397.7 861.0,397.7C866.7,397.7 866.7,396.0 872.4,396.0C878.1,396.0 878.1,397.7 883.8,397.7C889.4,397.7 889.4,397.7 895.1,397.7C900.8,397.7 900.8,397.7 906.5,397.7C912.2,397.7 912.2,390.0 917.8,390.0C923.5,390.0 923.5,397.7 929.2,397.7C934.9,397.7 934.9,391.4 940.6,391.4C946.2,391.4 946.2,397.7 951.9,397.7C957.6,397.7 957.6,397.7 963.3,397.7C969.0,397.7 969.0,397.7 974.6,397.7C980.3,397.7 980.3,390.5 986.0,390.5C991.7,390.5 991.7,397.7 997.4,397.7C1003.0,397.7 1003.0,378.7 1008.7,378.7C1014.4,378.7 1014.4,397.7 1020.1,397.7C1025.8,397.7 1025.8,397.7 1031.4,397.7C1037.1,397.7 1037.1,389.7 1042.8,389.7C1048.5,389.7 1048.5,397.7 1054.2,397.7C1059.8,397.7 1059.8,397.7 1065.5,397.7C1071.2,397.7 1071.2,375.0 1076.9,375.0C1082.6,375.0 1082.6,397.7 1088.2,397.7C1093.9,397.7 1093.9,397.7 1099.6,397.7C1105.3,397.7 1105.3,397.7 1111.0,397.7C1116.6,397.7 1116.6,397.7 1122.3,397.7C1128.0,397.7 1128.0,397.7 1133.7,397.7C1139.4,397.7 1139.4,383.9 1145.0,383.9C1150.7,383.9 1150.7,397.7 1156.4,397.7C1162.1,397.7 1162.1,397.7 1167.8,397.7C1173.4,397.7 1173.4,397.7 1179.1,397.7C1184.8,397.7 1184.8,397.7 1190.5,397.7C1196.2,397.7 1196.2,397.7 1201.8,397.7C1207.5,397.7 1207.5,397.7 1213.2,397.7C1218.9,397.7 1218.9,397.7 1224.6,397.7C1230.2,397.7 1230.2,379.5 1235.9,379.5C1241.6,379.5 1241.6,397.7 1247.3,397.7C1253.0,397.7 1253.0,364.8 1258.6,364.8C1264.3,364.8 1264.3,397.7 1270.0,397.7C1275.7,397.7 1275.7,391.2 1281.4,391.2C1287.0,391.2 1287.0,391.2 1292.7,391.2C1298.4,391.2 1298.4,391.2 1304.1,391.2C1309.8,391.2 1309.8,359.6 1315.4,359.6" stroke="#9db2bf" stroke-width="1.5" fill="none" stroke-dasharray="1.5 3"/><path d="M304.4,376.4C310.1,376.4 310.1,397.7 315.8,397.7C321.4,397.7 321.4,357.0 327.1,357.0C332.8,357.0 332.8,397.7 338.5,397.7C344.2,397.7 344.2,397.7 349.8,397.7C355.5,397.7 355.5,390.5 361.2,390.5C366.9,390.5 366.9,393.0 372.6,393.0C378.2,393.0 378.2,386.0 383.9,386.0C389.6,386.0 389.6,386.0 395.3,386.0C401.0,386.0 401.0,385.6 406.6,385.6C412.3,385.6 412.3,397.7 418.0,397.7C423.7,397.7 423.7,397.7 429.4,397.7C435.0,397.7 435.0,397.7 440.7,397.7C446.4,397.7 446.4,351.0 452.1,351.0C457.8,351.0 457.8,393.3 463.4,393.3C469.1,393.3 469.1,364.7 474.8,364.7C480.5,364.7 480.5,383.5 486.2,383.5C491.8,383.5 491.8,375.0 497.5,375.0C503.2,375.0 503.2,384.2 508.9,384.2C514.6,384.2 514.6,383.7 520.2,383.7C525.9,383.7 525.9,383.0 531.6,383.0C537.3,383.0 537.3,381.6 543.0,381.6C548.6,381.6 548.6,378.6 554.3,378.6C560.0,378.6 560.0,383.0 565.7,383.0C571.4,383.0 571.4,397.7 577.0,397.7C582.7,397.7 582.7,383.7 588.4,383.7C594.1,383.7 594.1,397.7 599.8,397.7C605.4,397.7 605.4,366.6 611.1,366.6C616.8,366.6 616.8,397.7 622.5,397.7C628.2,397.7 628.2,367.0 633.8,367.0C639.5,367.0 639.5,369.0 645.2,369.0C650.9,369.0 650.9,366.8 656.6,366.8C662.2,366.8 662.2,389.6 667.9,389.6C673.6,389.6 673.6,389.8 679.3,389.8C685.0,389.8 685.0,391.4 690.6,391.4C696.3,391.4 696.3,383.7 702.0,383.7C707.7,383.7 707.7,397.7 713.4,397.7C719.0,397.7 719.0,397.7 724.7,397.7C730.4,397.7 730.4,397.7 736.1,397.7C741.8,397.7 741.8,397.7 747.4,397.7C753.1,397.7 753.1,397.7 758.8,397.7C764.5,397.7 764.5,397.7 770.2,397.7C775.8,397.7 775.8,375.0 781.5,375.0C787.2,375.0 787.2,383.0 792.9,383.0C798.6,383.0 798.6,388.2 804.2,388.2C809.9,388.2 809.9,392.9 815.6,392.9C821.3,392.9 821.3,391.4 827.0,391.4C832.6,391.4 832.6,397.7 838.3,397.7C844.0,397.7 844.0,369.4 849.7,369.4C855.4,369.4 855.4,391.4 861.0,391.4C866.7,391.4 866.7,368.9 872.4,368.9C878.1,368.9 878.1,362.4 883.8,362.4C889.4,362.4 889.4,378.8 895.1,378.8C900.8,378.8 900.8,378.6 906.5,378.6C912.2,378.6 912.2,397.7 917.8,397.7C923.5,397.7 923.5,391.4 929.2,391.4C934.9,391.4 934.9,366.6 940.6,366.6C946.2,366.6 946.2,381.1 951.9,381.1C957.6,381.1 957.6,362.8 963.3,362.8C969.0,362.8 969.0,397.7 974.6,397.7C980.3,397.7 980.3,373.0 986.0,373.0C991.7,373.0 991.7,384.6 997.4,384.6C1003.0,384.6 1003.0,365.5 1008.7,365.5C1014.4,365.5 1014.4,367.7 1020.1,367.7C1025.8,367.7 1025.8,397.7 1031.4,397.7C1037.1,397.7 1037.1,376.1 1042.8,376.1C1048.5,376.1 1048.5,380.2 1054.2,380.2C1059.8,380.2 1059.8,381.7 1065.5,381.7C1071.2,381.7 1071.2,369.2 1076.9,369.2C1082.6,369.2 1082.6,355.2 1088.2,355.2C1093.9,355.2 1093.9,372.9 1099.6,372.9C1105.3,372.9 1105.3,397.7 1111.0,397.7C1116.6,397.7 1116.6,366.2 1122.3,366.2C1128.0,366.2 1128.0,380.2 1133.7,380.2C1139.4,380.2 1139.4,397.7 1145.0,397.7C1150.7,397.7 1150.7,283.2 1156.4,283.2C1162.1,283.2 1162.1,388.3 1167.8,388.3C1173.4,388.3 1173.4,397.7 1179.1,397.7C1184.8,397.7 1184.8,362.6 1190.5,362.6C1196.2,362.6 1196.2,364.0 1201.8,364.0C1207.5,364.0 1207.5,397.7 1213.2,397.7C1218.9,397.7 1218.9,378.7 1224.6,378.7C1230.2,378.7 1230.2,397.7 1235.9,397.7C1241.6,397.7 1241.6,397.7 1247.3,397.7C1253.0,397.7 1253.0,389.0 1258.6,389.0C1264.3,389.0 1264.3,397.7 1270.0,397.7C1275.7,397.7 1275.7,378.7 1281.4,378.7C1287.0,378.7 1287.0,391.2 1292.7,391.2C1298.4,391.2 1298.4,397.7 1304.1,397.7C1309.8,397.7 1309.8,369.2 1315.4,369.2" stroke="#4b9dcd" stroke-width="2" fill="none"/></svg>
<div class="t" style="left:253px;top:260.5px;font-size:11px;font-weight:400;color:#616161;line-height:16px;">$400</div>
<div class="t" style="left:253px;top:324.5px;font-size:11px;font-weight:400;color:#616161;line-height:16px;">$200</div>
<div class="t" style="left:253px;top:389.5px;font-size:11px;font-weight:400;color:#616161;line-height:16px;">$0</div>
<div class="t" style="left:253px;top:453.5px;font-size:11px;font-weight:400;color:#616161;line-height:16px;">-$200</div>
<div class="t" style="left:264.4px;width:80px;text-align:center;top:474px;font-size:10px;line-height:16px;color:#616161">Sep 16</div>
<div class="t" style="left:321.2px;width:80px;text-align:center;top:474px;font-size:10px;line-height:16px;color:#616161">Sep 21</div>
<div class="t" style="left:378.0px;width:80px;text-align:center;top:474px;font-size:10px;line-height:16px;color:#616161">Sep 26</div>
<div class="t" style="left:434.8px;width:80px;text-align:center;top:474px;font-size:10px;line-height:16px;color:#616161">Oct 1</div>
<div class="t" style="left:491.6px;width:80px;text-align:center;top:474px;font-size:10px;line-height:16px;color:#616161">Oct 6</div>
<div class="t" style="left:548.4px;width:80px;text-align:center;top:474px;font-size:10px;line-height:16px;color:#616161">Oct 11</div>
<div class="t" style="left:605.2px;width:80px;text-align:center;top:474px;font-size:10px;line-height:16px;color:#616161">Oct 16</div>
<div class="t" style="left:662.0px;width:80px;text-align:center;top:474px;font-size:10px;line-height:16px;color:#616161">Oct 21</div>
<div class="t" style="left:718.8px;width:80px;text-align:center;top:474px;font-size:10px;line-height:16px;color:#616161">Oct 26</div>
<div class="t" style="left:775.6px;width:80px;text-align:center;top:474px;font-size:10px;line-height:16px;color:#616161">Oct 31</div>
<div class="t" style="left:832.4px;width:80px;text-align:center;top:474px;font-size:10px;line-height:16px;color:#616161">Nov 5</div>
<div class="t" style="left:889.2px;width:80px;text-align:center;top:474px;font-size:10px;line-height:16px;color:#616161">Nov 10</div>
<div class="t" style="left:946.0px;width:80px;text-align:center;top:474px;font-size:10px;line-height:16px;color:#616161">Nov 15</div>
<div class="t" style="left:1002.8px;width:80px;text-align:center;top:474px;font-size:10px;line-height:16px;color:#616161">Nov 20</div>
<div class="t" style="left:1059.6px;width:80px;text-align:center;top:474px;font-size:10px;line-height:16px;color:#616161">Nov 25</div>
<div class="t" style="left:1116.4px;width:80px;text-align:center;top:474px;font-size:10px;line-height:16px;color:#616161">Nov 30</div>
<div class="t" style="left:1173.2px;width:80px;text-align:center;top:474px;font-size:10px;line-height:16px;color:#616161">Dec 5</div>
<div class="t" style="left:1230.0px;width:80px;text-align:center;top:474px;font-size:10px;line-height:16px;color:#616161">Dec 10</div>
<div class="abs" style="left:659px;top:513.5px;width:11px;height:2px;background:#4b9dcd;border-radius:1px"></div>
<div class="t" style="left:677px;top:506.5px;font-size:10px;font-weight:400;color:#616161;line-height:16px;">Sep 16–Dec 14, 2024</div>
<svg class="abs" style="left:790px;top:513px" width="13" height="3"><path d="M0.5 1.5 H13" stroke="#9db2bf" stroke-width="1.5" stroke-dasharray="1.5 3"/></svg>
<div class="t" style="left:809px;top:506.5px;font-size:10px;font-weight:400;color:#616161;line-height:16px;">Jun 18–Sep 15, 2024</div>
<div class="card" style="left:1348px;top:189px;width:539px;height:349px"></div>
<div class="ttl" style="left:1362px;top:203.5px">Total sales breakdown</div>
<div class="row" style="left:1362px;top:229.5px;width:510px;height:32px"></div>
<div class="t" style="left:1372.5px;top:237.0px;font-size:12.2px;font-weight:400;color:#303030;line-height:16px;">Gross sales</div>
<div class="t" style="right:101px;top:237.0px;font-size:12.7px;font-weight:400;color:#303030;line-height:16px;">$4,998.87</div>
<div class="t" style="left:1825px;top:238.1px;font-size:9.6px;font-weight:700;color:#1f7f52;line-height:16px;letter-spacing:0.8px"><svg width="5" height="5" viewBox="0 0 5 5" style="margin-right:3.8px;vertical-align:1px"><path d="M0.8 4.3 L3.9 1.2 M1.2 0.9 H4.1 V3.8" stroke="currentColor" stroke-width="1.4" fill="none" stroke-linecap="square"/></svg>344%</div>
<div class="row" style="left:1362px;top:266.1px;width:510px;height:32px"></div>
<div class="t" style="left:1372.5px;top:273.6px;font-size:12.2px;font-weight:400;color:#303030;line-height:16px;">Discounts</div>
<div class="t" style="right:101px;top:273.6px;font-size:12.7px;font-weight:400;color:#303030;line-height:16px;">-$797.68</div>
<div class="t" style="left:1825px;top:274.7px;font-size:9.6px;font-weight:700;color:#616161;line-height:16px;letter-spacing:0.8px"><svg width="5" height="5" viewBox="0 0 5 5" style="margin-right:3.8px;vertical-align:1px"><path d="M0.8 0.7 L3.9 3.8 M4.1 1.2 V4.1 H1.2" stroke="currentColor" stroke-width="1.4" fill="none" stroke-linecap="square"/></svg>59%</div>
<div class="row" style="left:1362px;top:302.6px;width:510px;height:32px"></div>
<div class="t" style="left:1372.5px;top:310.1px;font-size:12.2px;font-weight:400;color:#303030;line-height:16px;">Returns</div>
<div class="t" style="right:101px;top:310.1px;font-size:12.7px;font-weight:400;color:#303030;line-height:16px;">-$103.63</div>
<div class="abs" style="left:1838.5px;top:318.1px;width:10.5px;height:1px;background:#8a8a8a"></div>
<div class="row" style="left:1362px;top:339.1px;width:510px;height:32px"></div>
<div class="t" style="left:1372.5px;top:346.6px;font-size:12.2px;font-weight:400;color:#303030;line-height:16px;">Net sales</div>
<div class="t" style="right:101px;top:346.6px;font-size:12.7px;font-weight:400;color:#303030;line-height:16px;">$4,097.56</div>
<div class="t" style="left:1825px;top:347.8px;font-size:9.6px;font-weight:700;color:#1f7f52;line-height:16px;letter-spacing:0.8px"><svg width="5" height="5" viewBox="0 0 5 5" style="margin-right:3.8px;vertical-align:1px"><path d="M0.8 4.3 L3.9 1.2 M1.2 0.9 H4.1 V3.8" stroke="currentColor" stroke-width="1.4" fill="none" stroke-linecap="square"/></svg>557%</div>
<div class="row" style="left:1362px;top:375.7px;width:510px;height:32px"></div>
<div class="t" style="left:1372.5px;top:383.2px;font-size:12.2px;font-weight:400;color:#303030;line-height:16px;">Shipping charges</div>
<div class="t" style="right:101px;top:383.2px;font-size:12.7px;font-weight:400;color:#303030;line-height:16px;">$117.69</div>
<div class="t" style="left:1825px;top:384.3px;font-size:9.6px;font-weight:700;color:#1f7f52;line-height:16px;letter-spacing:0.8px"><svg width="5" height="5" viewBox="0 0 5 5" style="margin-right:3.8px;vertical-align:1px"><path d="M0.8 4.3 L3.9 1.2 M1.2 0.9 H4.1 V3.8" stroke="currentColor" stroke-width="1.4" fill="none" stroke-linecap="square"/></svg>168%</div>
<div class="row" style="left:1362px;top:412.2px;width:510px;height:32px"></div>
<div class="t" style="left:1372.5px;top:419.8px;font-size:12.2px;font-weight:400;color:#303030;line-height:16px;">Return fees</div>
<div class="t" style="right:101px;top:419.8px;font-size:12.7px;font-weight:400;color:#303030;line-height:16px;">$0.00</div>
<div class="abs" style="left:1838.5px;top:427.8px;width:10.5px;height:1px;background:#8a8a8a"></div>
<div class="row" style="left:1362px;top:448.8px;width:510px;height:32px"></div>
<div class="t" style="left:1372.5px;top:456.3px;font-size:12.2px;font-weight:400;color:#303030;line-height:16px;">Taxes</div>
<div class="t" style="right:101px;top:456.3px;font-size:12.7px;font-weight:400;color:#303030;line-height:16px;">$0.00</div>
<div class="abs" style="left:1838.5px;top:464.3px;width:10.5px;height:1px;background:#8a8a8a"></div>
<div class="row" style="left:1362px;top:485.3px;width:510px;height:32px"></div>
<div class="t" style="left:1372.5px;top:492.8px;font-size:12.2px;font-weight:400;color:#303030;line-height:16px;">Total sales</div>
<div class="t" style="right:101px;top:492.8px;font-size:12.7px;font-weight:400;color:#303030;line-height:16px;">$4,215.25</div>
<div class="t" style="left:1825px;top:493.9px;font-size:9.6px;font-weight:700;color:#1f7f52;line-height:16px;letter-spacing:0.8px"><svg width="5" height="5" viewBox="0 0 5 5" style="margin-right:3.8px;vertical-align:1px"><path d="M0.8 4.3 L3.9 1.2 M1.2 0.9 H4.1 V3.8" stroke="currentColor" stroke-width="1.4" fill="none" stroke-linecap="square"/></svg>532%</div>
<div class="card" style="left:238px;top:554px;width:539px;height:228px"></div>
<div class="ttl" style="left:252px;top:568.5px">Total sales by sales channel</div>
<div class="abs" style="left:333.5px;top:608.8px;width:150.4px;height:150.4px;border-radius:50%;background:conic-gradient(from 0deg, #3aa0dd 0deg, #2f93d4 90deg, #35a0dc 180deg, #45b1e8 270deg, #4ab5ec 355deg);"></div>
<div class="abs" style="left:348.9px;top:624.2px;width:119.6px;height:119.6px;border-radius:50%;background:#fff"></div>
<svg class="abs" style="left:333.5px;top:608.8px" width="151" height="151" viewBox="0 0 151 151"><rect x="68.4" y="0" width="7.9" height="17" fill="#fff"/><path d="M70.6 1 L74.2 1 L73.8 14.6 L70.9 14.6 Z" fill="#9a68d8"/></svg>
<div class="t" style="left:383.5px;top:667.0px;font-size:18.9px;font-weight:400;color:#303030;line-height:22px;-webkit-text-stroke:0.5px #303030;">$4.2K</div>
<div class="t" style="left:390.5px;top:687.6px;font-size:10.9px;font-weight:700;color:#1f7f52;line-height:16px;letter-spacing:0.1px"><svg width="5" height="5" viewBox="0 0 5 5" style="margin-right:3.8px;vertical-align:1px"><path d="M0.8 4.3 L3.9 1.2 M1.2 0.9 H4.1 V3.8" stroke="currentColor" stroke-width="1.4" fill="none" stroke-linecap="square"/></svg>532%</div>
<div class="abs" style="left:511.5px;top:654px;width:10px;height:10px;background:#36a3e2;border-radius:2px"></div>
<div class="t" style="left:525px;top:651.0px;font-size:11.3px;font-weight:400;color:#616161;line-height:16px;">Online Store</div>
<div class="abs" style="left:511.5px;top:679px;width:10px;height:10px;background:#8a3fe0;border-radius:2px"></div>
<div class="t" style="left:525px;top:676.0px;font-size:11.3px;font-weight:400;color:#616161;line-height:16px;">Shop</div>
<div class="abs" style="left:511.5px;top:704px;width:10px;height:10px;background:#7b73e6;border-radius:2px"></div>
<div class="t" style="left:525px;top:701.0px;font-size:11.3px;font-weight:400;color:#616161;line-height:16px;">Collabs</div>
<div class="t" style="right:1268.5px;top:651.0px;font-size:11.3px;font-weight:400;color:#616161;line-height:16px;">$4.2K</div>
<div class="t" style="left:652px;top:652.0px;font-size:9.2px;font-weight:700;color:#1f7f52;line-height:16px;letter-spacing:0.6px"><svg width="5" height="5" viewBox="0 0 5 5" style="margin-right:3px;vertical-align:1px"><path d="M0.8 4.3 L3.9 1.2 M1.2 0.9 H4.1 V3.8" stroke="currentColor" stroke-width="1.4" fill="none" stroke-linecap="square"/></svg>524%</div>
<div class="t" style="right:1270px;top:676.0px;font-size:11.3px;font-weight:400;color:#616161;line-height:16px;">$53.7</div>
<div class="t" style="right:1270px;top:701.0px;font-size:11.3px;font-weight:400;color:#616161;line-height:16px;">$0</div>
<div class="abs" style="left:653px;top:684px;width:11px;height:1px;background:#616161"></div>
<div class="abs" style="left:653px;top:709px;width:11px;height:1px;background:#616161"></div>
<div class="card" style="left:793px;top:554px;width:539px;height:228px"></div>
<div class="ttl" style="left:807px;top:568.5px">Average order value over time</div>
<div class="t" style="left:807px;top:593.5px;font-size:18.4px;font-weight:400;color:#303030;line-height:22px;-webkit-text-stroke:0.5px #303030;">$31.83</div>
<div class="t" style="left:870px;top:597.1px;font-size:9.8px;font-weight:700;color:#1f7f52;line-height:16px;letter-spacing:0.95px"><svg width="5" height="5" viewBox="0 0 5 5" style="margin-right:3.8px;vertical-align:1px"><path d="M0.8 4.3 L3.9 1.2 M1.2 0.9 H4.1 V3.8" stroke="currentColor" stroke-width="1.4" fill="none" stroke-linecap="square"/></svg>23%</div>
<svg class="abs" style="left:0;top:0;overflow:visible" width="1919" height="953"><line x1="852" x2="1313" y1="633.5" y2="633.5" stroke="#ececec"/><path d="M853.8,705.0C856.3,705.0 856.3,705.0 858.9,705.0C861.5,705.0 861.5,705.0 864.1,705.0C866.7,705.0 866.7,705.0 869.3,705.0C871.9,705.0 871.9,705.0 874.5,705.0C877.1,705.0 877.1,705.0 879.6,705.0C882.2,705.0 882.2,705.0 884.8,705.0C887.4,705.0 887.4,705.0 890.0,705.0C892.6,705.0 892.6,705.0 895.2,705.0C897.8,705.0 897.8,705.0 900.4,705.0C903.0,705.0 903.0,705.0 905.5,705.0C908.1,705.0 908.1,705.0 910.7,705.0C913.3,705.0 913.3,705.0 915.9,705.0C918.5,705.0 918.5,705.0 921.1,705.0C923.7,705.0 923.7,705.0 926.3,705.0C928.9,705.0 928.9,705.0 931.5,705.0C934.0,705.0 934.0,705.0 936.6,705.0C939.2,705.0 939.2,705.0 941.8,705.0C944.4,705.0 944.4,705.0 947.0,705.0C949.6,705.0 949.6,705.0 952.2,705.0C954.8,705.0 954.8,705.0 957.4,705.0C959.9,705.0 959.9,705.0 962.5,705.0C965.1,705.0 965.1,705.0 967.7,705.0C970.3,705.0 970.3,705.0 972.9,705.0C975.5,705.0 975.5,705.0 978.1,705.0C980.7,705.0 980.7,705.0 983.2,705.0C985.8,705.0 985.8,705.0 988.4,705.0C991.0,705.0 991.0,705.0 993.6,705.0C996.2,705.0 996.2,705.0 998.8,705.0C1001.4,705.0 1001.4,705.0 1004.0,705.0C1006.6,705.0 1006.6,705.0 1009.1,705.0C1011.7,705.0 1011.7,698.8 1014.3,698.8C1016.9,698.8 1016.9,705.0 1019.5,705.0C1022.1,705.0 1022.1,705.0 1024.7,705.0C1027.3,705.0 1027.3,705.0 1029.9,705.0C1032.5,705.0 1032.5,705.0 1035.0,705.0C1037.6,705.0 1037.6,705.0 1040.2,705.0C1042.8,705.0 1042.8,705.0 1045.4,705.0C1048.0,705.0 1048.0,705.0 1050.6,705.0C1053.2,705.0 1053.2,705.0 1055.8,705.0C1058.4,705.0 1058.4,705.0 1061.0,705.0C1063.5,705.0 1063.5,705.0 1066.1,705.0C1068.7,705.0 1068.7,705.0 1071.3,705.0C1073.9,705.0 1073.9,705.0 1076.5,705.0C1079.1,705.0 1079.1,705.0 1081.7,705.0C1084.3,705.0 1084.3,705.0 1086.8,705.0C1089.4,705.0 1089.4,705.0 1092.0,705.0C1094.6,705.0 1094.6,705.0 1097.2,705.0C1099.8,705.0 1099.8,705.0 1102.4,705.0C1105.0,705.0 1105.0,705.0 1107.6,705.0C1110.2,705.0 1110.2,705.0 1112.8,705.0C1115.3,705.0 1115.3,705.0 1117.9,705.0C1120.5,705.0 1120.5,705.0 1123.1,705.0C1125.7,705.0 1125.7,705.0 1128.3,705.0C1130.9,705.0 1130.9,698.0 1133.5,698.0C1136.1,698.0 1136.1,705.0 1138.7,705.0C1141.2,705.0 1141.2,700.0 1143.8,700.0C1146.4,700.0 1146.4,705.0 1149.0,705.0C1151.6,705.0 1151.6,705.0 1154.2,705.0C1156.8,705.0 1156.8,705.0 1159.4,705.0C1162.0,705.0 1162.0,705.0 1164.5,705.0C1167.1,705.0 1167.1,701.0 1169.7,701.0C1172.3,701.0 1172.3,685.0 1174.9,685.0C1177.5,685.0 1177.5,705.0 1180.1,705.0C1182.7,705.0 1182.7,705.0 1185.3,705.0C1187.9,705.0 1187.9,700.0 1190.5,700.0C1193.0,700.0 1193.0,705.0 1195.6,705.0C1198.2,705.0 1198.2,705.0 1200.8,705.0C1203.4,705.0 1203.4,695.0 1206.0,695.0C1208.6,695.0 1208.6,705.0 1211.2,705.0C1213.8,705.0 1213.8,705.0 1216.3,705.0C1218.9,705.0 1218.9,705.0 1221.5,705.0C1224.1,705.0 1224.1,705.0 1226.7,705.0C1229.3,705.0 1229.3,705.0 1231.9,705.0C1234.5,705.0 1234.5,691.0 1237.1,691.0C1239.7,691.0 1239.7,705.0 1242.2,705.0C1244.8,705.0 1244.8,705.0 1247.4,705.0C1250.0,705.0 1250.0,705.0 1252.6,705.0C1255.2,705.0 1255.2,705.0 1257.8,705.0C1260.4,705.0 1260.4,705.0 1263.0,705.0C1265.6,705.0 1265.6,705.0 1268.2,705.0C1270.7,705.0 1270.7,705.0 1273.3,705.0C1275.9,705.0 1275.9,696.0 1278.5,696.0C1281.1,696.0 1281.1,705.0 1283.7,705.0C1286.3,705.0 1286.3,688.0 1288.9,688.0C1291.5,688.0 1291.5,705.0 1294.0,705.0C1296.6,705.0 1296.6,705.0 1299.2,705.0C1301.8,705.0 1301.8,705.0 1304.4,705.0C1307.0,705.0 1307.0,705.0 1309.6,705.0C1312.2,705.0 1312.2,685.6 1314.8,685.6" stroke="#9db2bf" stroke-width="1.4" fill="none" stroke-dasharray="1.5 2.5"/><path d="M853.8,693.1C856.3,693.1 856.3,705.0 858.9,705.0C861.5,705.0 861.5,683.8 864.1,683.8C866.7,683.8 866.7,705.0 869.3,705.0C871.9,705.0 871.9,705.0 874.5,705.0C877.1,705.0 877.1,696.9 879.6,696.9C882.2,696.9 882.2,699.4 884.8,699.4C887.4,699.4 887.4,692.3 890.0,692.3C892.6,692.3 892.6,692.3 895.2,692.3C897.8,692.3 897.8,698.8 900.4,698.8C903.0,698.8 903.0,705.0 905.5,705.0C908.1,705.0 908.1,705.0 910.7,705.0C913.3,705.0 913.3,705.0 915.9,705.0C918.5,705.0 918.5,694.8 921.1,694.8C923.7,694.8 923.7,699.4 926.3,699.4C928.9,699.4 928.9,668.1 931.5,668.1C934.0,668.1 934.0,696.9 936.6,696.9C939.2,696.9 939.2,693.1 941.8,693.1C944.4,693.1 944.4,698.1 947.0,698.1C949.6,698.1 949.6,690.6 952.2,690.6C954.8,690.6 954.8,697.3 957.4,697.3C959.9,697.3 959.9,696.5 962.5,696.5C965.1,696.5 965.1,695.3 967.7,695.3C970.3,695.3 970.3,697.5 972.9,697.5C975.5,697.5 975.5,705.0 978.1,705.0C980.7,705.0 980.7,698.1 983.2,698.1C985.8,698.1 985.8,705.0 988.4,705.0C991.0,705.0 991.0,688.1 993.6,688.1C996.2,688.1 996.2,705.0 998.8,705.0C1001.4,705.0 1001.4,695.0 1004.0,695.0C1006.6,695.0 1006.6,697.3 1009.1,697.3C1011.7,697.3 1011.7,688.5 1014.3,688.5C1016.9,688.5 1016.9,696.5 1019.5,696.5C1022.1,696.5 1022.1,696.9 1024.7,696.9C1027.3,696.9 1027.3,698.8 1029.9,698.8C1032.5,698.8 1032.5,690.6 1035.0,690.6C1037.6,690.6 1037.6,705.0 1040.2,705.0C1042.8,705.0 1042.8,705.0 1045.4,705.0C1048.0,705.0 1048.0,705.0 1050.6,705.0C1053.2,705.0 1053.2,705.0 1055.8,705.0C1058.4,705.0 1058.4,705.0 1061.0,705.0C1063.5,705.0 1063.5,705.0 1066.1,705.0C1068.7,705.0 1068.7,699.4 1071.3,699.4C1073.9,699.4 1073.9,698.1 1076.5,698.1C1079.1,698.1 1079.1,700.6 1081.7,700.6C1084.3,700.6 1084.3,700.3 1086.8,700.3C1089.4,700.3 1089.4,699.0 1092.0,699.0C1094.6,699.0 1094.6,705.0 1097.2,705.0C1099.8,705.0 1099.8,690.6 1102.4,690.6C1105.0,690.6 1105.0,698.8 1107.6,698.8C1110.2,698.8 1110.2,689.8 1112.8,689.8C1115.3,689.8 1115.3,692.3 1117.9,692.3C1120.5,692.3 1120.5,694.4 1123.1,694.4C1125.7,694.4 1125.7,684.0 1128.3,684.0C1130.9,684.0 1130.9,705.0 1133.5,705.0C1136.1,705.0 1136.1,698.1 1138.7,698.1C1141.2,698.1 1141.2,688.1 1143.8,688.1C1146.4,688.1 1146.4,695.6 1149.0,695.6C1151.6,695.6 1151.6,692.5 1154.2,692.5C1156.8,692.5 1156.8,705.0 1159.4,705.0C1162.0,705.0 1162.0,696.0 1164.5,696.0C1167.1,696.0 1167.1,699.4 1169.7,699.4C1172.3,699.4 1172.3,695.6 1174.9,695.6C1177.5,695.6 1177.5,694.8 1180.1,694.8C1182.7,694.8 1182.7,705.0 1185.3,705.0C1187.9,705.0 1187.9,693.1 1190.5,693.1C1193.0,693.1 1193.0,695.0 1195.6,695.0C1198.2,695.0 1198.2,695.6 1200.8,695.6C1203.4,695.6 1203.4,689.4 1206.0,689.4C1208.6,689.4 1208.6,689.0 1211.2,689.0C1213.8,689.0 1213.8,691.3 1216.3,691.3C1218.9,691.3 1218.9,705.0 1221.5,705.0C1224.1,705.0 1224.1,687.8 1226.7,687.8C1229.3,687.8 1229.3,695.6 1231.9,695.6C1234.5,695.6 1234.5,705.0 1237.1,705.0C1239.7,705.0 1239.7,673.1 1242.2,673.1C1244.8,673.1 1244.8,695.0 1247.4,695.0C1250.0,695.0 1250.0,696.9 1252.6,696.9C1255.2,696.9 1255.2,692.3 1257.8,692.3C1260.4,692.3 1260.4,696.9 1263.0,696.9C1265.6,696.9 1265.6,705.0 1268.2,705.0C1270.7,705.0 1270.7,684.0 1273.3,684.0C1275.9,684.0 1275.9,705.0 1278.5,705.0C1281.1,705.0 1281.1,705.0 1283.7,705.0C1286.3,705.0 1286.3,695.6 1288.9,695.6C1291.5,695.6 1291.5,705.0 1294.0,705.0C1296.6,705.0 1296.6,698.1 1299.2,698.1C1301.8,698.1 1301.8,698.8 1304.4,698.8C1307.0,698.8 1307.0,705.0 1309.6,705.0C1312.2,705.0 1312.2,689.4 1314.8,689.4" stroke="#4b9dcd" stroke-width="1.8" fill="none"/></svg>
<div class="t" style="left:808px;top:625.5px;font-size:11px;font-weight:400;color:#616161;line-height:16px;">$200</div>
<div class="t" style="left:808px;top:696.5px;font-size:11px;font-weight:400;color:#616161;line-height:16px;">$0</div>
<div class="t" style="left:813.5px;width:80px;text-align:center;top:716.5px;font-size:10px;line-height:16px;color:#616161">Sep 16</div>
<div class="t" style="left:865.3px;width:80px;text-align:center;top:716.5px;font-size:10px;line-height:16px;color:#616161">Sep 26</div>
<div class="t" style="left:917.1px;width:80px;text-align:center;top:716.5px;font-size:10px;line-height:16px;color:#616161">Oct 6</div>
<div class="t" style="left:968.9px;width:80px;text-align:center;top:716.5px;font-size:10px;line-height:16px;color:#616161">Oct 16</div>
<div class="t" style="left:1020.7px;width:80px;text-align:center;top:716.5px;font-size:10px;line-height:16px;color:#616161">Oct 26</div>
<div class="t" style="left:1072.5px;width:80px;text-align:center;top:716.5px;font-size:10px;line-height:16px;color:#616161">Nov 5</div>
<div class="t" style="left:1124.3px;width:80px;text-align:center;top:716.5px;font-size:10px;line-height:16px;color:#616161">Nov 15</div>
<div class="t" style="left:1176.1px;width:80px;text-align:center;top:716.5px;font-size:10px;line-height:16px;color:#616161">Nov 25</div>
<div class="t" style="left:1227.9px;width:80px;text-align:center;top:716.5px;font-size:10px;line-height:16px;color:#616161">Dec 5</div>
<div class="abs" style="left:935px;top:757.5px;width:12px;height:2px;background:#4b9dcd;border-radius:1px"></div>
<div class="t" style="left:953.5px;top:750.5px;font-size:10px;font-weight:400;color:#616161;line-height:16px;">Sep 16–Dec 14, 2024</div>
<svg class="abs" style="left:1067px;top:757px" width="13" height="3"><path d="M0.5 1.5 H13" stroke="#9db2bf" stroke-width="1.5" stroke-dasharray="1.5 3"/></svg>
<div class="t" style="left:1085.5px;top:750.5px;font-size:10px;font-weight:400;color:#616161;line-height:16px;">Jun 18–Sep 15, 2024</div>
<div class="card" style="left:1348px;top:554px;width:539px;height:228px"></div>
<div class="ttl" style="left:1362px;top:568.5px">Total sales by product</div>
<div class="t" style="left:1362px;top:602.5px;font-size:10.5px;font-weight:400;color:#616161;line-height:16px;">Amethyst Sunflower Charm Energy Bracelet · EclipticJew · Crystal</div>
<div class="abs" style="left:1362px;top:618.3px;width:456px;height:28px;background:linear-gradient(90deg,#2f8fd2,#52b7ed);border-radius:0 4px 4px 0"></div>
<div class="t" style="left:1828px;top:625.5px;font-size:10.8px;font-weight:400;color:#616161;line-height:16px;">$884.2</div>
<div class="abs" style="left:1362px;top:649px;width:60px;height:28px;background:#8fc6e9;border-radius:0 3px 3px 0"></div>
<div class="t" style="left:1431.5px;top:655.5px;font-size:10.8px;font-weight:400;color:#616161;line-height:16px;">$117.6</div>
<div class="t" style="left:1362px;top:692.5px;font-size:10.5px;font-weight:400;color:#616161;line-height:16px;">Vintage Amethyst Crystal Energy Bracelet · EclipticJew · Bracelets</div>
<div class="abs" style="left:1362px;top:709.8px;width:232.5px;height:28px;background:linear-gradient(90deg,#2f8fd2,#43a7e3);border-radius:0 4px 4px 0"></div>
<div class="t" style="left:1603.5px;top:716.5px;font-size:10.8px;font-weight:400;color:#616161;line-height:16px;">$450.9</div>
<div class="abs" style="left:1362px;top:739.7px;width:37px;height:28px;background:#8fc6e9;border-radius:0 3px 3px 0"></div>
<div class="t" style="left:1408px;top:746.0px;font-size:10.8px;font-weight:400;color:#616161;line-height:16px;">$72.4</div>
<div class="card" style="left:238px;top:796.5px;width:539px;height:200px"></div>
<div class="ttl" style="left:252px;top:811.5px">Sessions over time</div>
<div class="t" style="left:252px;top:836.5px;font-size:18.2px;font-weight:400;color:#303030;line-height:22px;-webkit-text-stroke:0.5px #303030;">18,256</div>
<div class="t" style="left:316px;top:840.9px;font-size:9.8px;font-weight:700;color:#616161;line-height:16px;letter-spacing:0.95px"><svg width="5" height="5" viewBox="0 0 5 5" style="margin-right:3.8px;vertical-align:1px"><path d="M0.8 0.7 L3.9 3.8 M4.1 1.2 V4.1 H1.2" stroke="currentColor" stroke-width="1.4" fill="none" stroke-linecap="square"/></svg>31%</div>
<div class="t" style="left:254px;top:868.5px;font-size:11px;font-weight:400;color:#616161;line-height:16px;">4K</div>
<div class="t" style="left:254px;top:907.0px;font-size:11px;font-weight:400;color:#616161;line-height:16px;">3K</div>
<svg class="abs" style="left:0;top:0;overflow:visible" width="1919" height="953"><line x1="286" x2="760" y1="877" y2="877" stroke="#ececec"/><line x1="286" x2="760" y1="915" y2="915" stroke="#ececec"/><path d="M424.0,1022.0C426.6,1022.0 426.6,918.4 429.3,918.4C432.0,918.4 432.0,1022.0 434.6,1022.0" stroke="#8eaabb" stroke-width="1.5" fill="none" stroke-dasharray="1.5 2.5"/><path d="M626.8,1022.0C629.4,1022.0 629.4,925.7 632.1,925.7C634.8,925.7 634.8,1022.0 637.4,1022.0" stroke="#8eaabb" stroke-width="1.5" fill="none" stroke-dasharray="1.5 2.5"/><path d="M658.6,1022.0C661.2,1022.0 661.2,939.7 663.9,939.7C666.6,939.7 666.6,1022.0 669.2,1022.0" stroke="#8eaabb" stroke-width="1.5" fill="none" stroke-dasharray="1.5 2.5"/><path d="M604.9,1022.0C607.5,1022.0 607.5,914.0 610.2,914.0C612.9,914.0 612.9,1022.0 615.5,1022.0" stroke="#4b9dcd" stroke-width="1.8" fill="none"/><path d="M408.5,1022.0C411.1,1022.0 411.1,945.0 413.8,945.0C416.5,945.0 416.5,1022.0 419.1,1022.0" stroke="#4b9dcd" stroke-width="1.8" fill="none"/></svg>
<div class="card" style="left:793px;top:796.5px;width:539px;height:200px"></div>
<div class="ttl" style="left:807px;top:811.5px">Conversion rate over time</div>
<div class="t" style="left:807px;top:836.5px;font-size:19px;font-weight:400;color:#303030;line-height:22px;-webkit-text-stroke:0.5px #303030;">0.66%</div>
<div class="t" style="left:869.5px;top:840.9px;font-size:9.8px;font-weight:700;color:#1f7f52;line-height:16px;letter-spacing:0.95px"><svg width="5" height="5" viewBox="0 0 5 5" style="margin-right:3.8px;vertical-align:1px"><path d="M0.8 4.3 L3.9 1.2 M1.2 0.9 H4.1 V3.8" stroke="currentColor" stroke-width="1.4" fill="none" stroke-linecap="square"/></svg>738%</div>
<div class="t" style="left:808px;top:868.5px;font-size:11px;font-weight:400;color:#616161;line-height:16px;">6.0%</div>
<div class="t" style="left:808px;top:918.5px;font-size:11px;font-weight:400;color:#616161;line-height:16px;">4.0%</div>
<svg class="abs" style="left:0;top:0;overflow:visible" width="1919" height="953"><line x1="855" x2="1313" y1="877" y2="877" stroke="#ececec"/><line x1="855" x2="1313" y1="927" y2="927" stroke="#ececec"/><path d="M1127.9,1014.0C1130.5,1014.0 1130.5,906.7 1133.1,906.7C1135.7,906.7 1135.7,1014.0 1138.2,1014.0" stroke="#8eaabb" stroke-width="1.5" fill="none" stroke-dasharray="1.5 2.5"/><path d="M1231.2,1014.0C1233.8,1014.0 1233.8,894.5 1236.4,894.5C1239.0,894.5 1239.0,1014.0 1241.6,1014.0" stroke="#8eaabb" stroke-width="1.5" fill="none" stroke-dasharray="1.5 2.5"/><path d="M896.0,1014.0C898.5,1014.0 898.5,884.0 901.1,884.0C903.7,884.0 903.7,1014.0 906.2,1014.0" stroke="#4b9dcd" stroke-width="1.8" fill="none"/><path d="M932.1,1014.0C934.7,1014.0 934.7,943.0 937.3,943.0C939.9,943.0 939.9,1014.0 942.4,1014.0" stroke="#4b9dcd" stroke-width="1.8" fill="none"/><path d="M978.2,1014.0C980.8,1014.0 980.8,946.5 983.4,946.5C986.0,946.5 986.0,1014.0 988.5,1014.0" stroke="#4b9dcd" stroke-width="1.8" fill="none"/><path d="M1236.5,1014.0C1239.1,1014.0 1239.1,930.0 1241.7,930.0C1244.3,930.0 1244.3,1014.0 1246.9,1014.0" stroke="#4b9dcd" stroke-width="1.8" fill="none"/><path d="M1256.8,1014.0C1259.4,1014.0 1259.4,941.7 1262.0,941.7C1264.6,941.7 1264.6,1014.0 1267.2,1014.0" stroke="#4b9dcd" stroke-width="1.8" fill="none"/></svg>
<div class="card" style="left:1348px;top:796.5px;width:539px;height:200px"></div>
<svg class="abs" style="left:1361px;top:815px" width="13" height="13" viewBox="0 0 13 13"><circle cx="6.5" cy="6.5" r="5.6" stroke="#3e8fc7" stroke-width="1.2" fill="none"/><path d="M6.5 5.6 V9.6" stroke="#3e8fc7" stroke-width="1.3"/><circle cx="6.5" cy="3.7" r="0.8" fill="#3e8fc7"/></svg>
<div class="ttl" style="left:1382px;top:811.5px">Conversion rate breakdown</div>
<div class="row" style="left:1362px;top:837.0px;width:510px;height:31px"></div>
<div class="t" style="left:1372.5px;top:844.8px;font-size:12.2px;font-weight:400;color:#303030;line-height:16px;">Sessions</div>
<div class="t" style="right:101px;top:844.8px;font-size:12.7px;font-weight:400;color:#303030;line-height:16px;">18,256</div>
<div class="t" style="left:1825px;top:845.9px;font-size:9.6px;font-weight:700;color:#616161;line-height:16px;letter-spacing:0.8px"><svg width="5" height="5" viewBox="0 0 5 5" style="margin-right:3.8px;vertical-align:1px"><path d="M0.8 0.7 L3.9 3.8 M4.1 1.2 V4.1 H1.2" stroke="currentColor" stroke-width="1.4" fill="none" stroke-linecap="square"/></svg>31%</div>
<div class="row" style="left:1362px;top:873.0px;width:510px;height:31px"></div>
<div class="t" style="left:1372.5px;top:880.9px;font-size:12.2px;font-weight:400;color:#303030;line-height:16px;">Sessions with cart additions</div>
<div class="t" style="right:101px;top:880.9px;font-size:12.7px;font-weight:400;color:#303030;line-height:16px;">443</div>
<div class="t" style="left:1825px;top:882.0px;font-size:9.6px;font-weight:700;color:#1f7f52;line-height:16px;letter-spacing:0.8px"><svg width="5" height="5" viewBox="0 0 5 5" style="margin-right:3.8px;vertical-align:1px"><path d="M0.8 4.3 L3.9 1.2 M1.2 0.9 H4.1 V3.8" stroke="currentColor" stroke-width="1.4" fill="none" stroke-linecap="square"/></svg>272%</div>
<div class="row" style="left:1362px;top:908.9px;width:510px;height:31px"></div>
<div class="t" style="left:1372.5px;top:916.9px;font-size:12.2px;font-weight:400;color:#303030;line-height:16px;">Added to cart rate</div>
<div class="t" style="right:101px;top:916.9px;font-size:12.7px;font-weight:400;color:#303030;line-height:16px;">2.43%</div>
<div class="t" style="left:1825px;top:918.0px;font-size:9.6px;font-weight:700;color:#1f7f52;line-height:16px;letter-spacing:0.8px"><svg width="5" height="5" viewBox="0 0 5 5" style="margin-right:3.8px;vertical-align:1px"><path d="M0.8 4.3 L3.9 1.2 M1.2 0.9 H4.1 V3.8" stroke="currentColor" stroke-width="1.4" fill="none" stroke-linecap="square"/></svg>442%</div>
<div class="abs" style="left:1554px;top:845px;width:208px;height:88px;background:#f9f9f9;border-radius:8px;box-shadow:0 2px 6px rgba(0,0,0,0.18),0 0 0 1px rgba(0,0,0,0.05)"></div>
<div class="abs" style="left:1679.5px;top:850.5px;width:37px;height:37.5px;background:#fdfdfd;border-radius:4px;box-shadow:0 0 0 1px rgba(0,0,0,0.03)"></div>
<svg class="abs" style="left:1569px;top:860px" width="18" height="18" viewBox="0 0 18 18"><path d="M9 1.2 C13.5 1.2 16.4 4.2 16.4 8.4 C16.4 12.8 13.2 16 8.8 16 C4.4 16 1.6 12.8 1.6 8.6 C1.6 4.2 4.6 1.2 9 1.2 Z" fill="#5fa630"/><path d="M5.4 8.6 L7.8 10.8 L11.6 6.6" stroke="#e6f2dc" stroke-width="1.7" fill="none"/><circle cx="12.9" cy="12.9" r="2.8" fill="#d3243a" stroke="#f9f9f9" stroke-width="1.2"/></svg>
<svg class="abs" style="left:1608px;top:859px" width="19" height="18" viewBox="0 0 19 18"><defs><linearGradient id="vg" x1="0" y1="0" x2="1" y2="1"><stop offset="0" stop-color="#3d3d4a"/><stop offset="1" stop-color="#a0a0aa"/></linearGradient></defs><path d="M1.4 5.8 L10.6 5.8 L6.6 14.6 Z" fill="url(#vg)"/><circle cx="13.2" cy="5.6" r="3.9" fill="#d63a52"/><path d="M11.9 4.3 L14.5 6.9 M14.5 4.3 L11.9 6.9" stroke="#fff" stroke-width="1.1"/></svg>
<svg class="abs" style="left:1649px;top:861px" width="17" height="17" viewBox="0 0 17 17"><g fill="#fff" stroke="#5a5a5a" stroke-width="0.9"><rect x="4.2" y="1.7" width="3.6" height="13.6" rx="1.8"/><rect x="9.2" y="1.7" width="3.6" height="13.6" rx="1.8"/><rect x="1.7" y="4.2" width="13.6" height="3.6" rx="1.8"/><rect x="1.7" y="9.2" width="13.6" height="3.6" rx="1.8"/></g><g fill="none" stroke="#5a5a5a" stroke-width="0.9"><path d="M4.2 7.8 V3.5 A1.8 1.8 0 0 1 7.8 3.5 M9.2 9.2 V13.5 A1.8 1.8 0 0 0 12.8 13.5"/></g></svg>
<svg class="abs" style="left:1688px;top:859px" width="20" height="20" viewBox="0 0 20 20"><path d="M2.6 17 C4 12 8 6 16.4 2.4 C15.6 8.4 11.6 13.6 4.4 15.6 Z" fill="#9a70d8"/><path d="M2.6 17 C6 13 10 8 16.4 2.4" stroke="#c4a8ee" stroke-width="0.8" fill="none"/></svg>
<svg class="abs" style="left:1730px;top:859px" width="16" height="20" viewBox="0 0 16 20"><path d="M1.6 4.2 C3.6 1.6 12.4 1.6 14.4 4.2 L14.4 6 L13 6 L13 17.8 C13 18.6 12.4 19 11.6 19 L4.4 19 C3.6 19 3 18.6 3 17.8 L3 6 L1.6 6 Z" fill="#2f2f2f"/><path d="M3.4 4.6 C5.2 3 10.8 3 12.6 4.6" stroke="#777" stroke-width="0.8" fill="none"/><path d="M5.8 9.6 V16.4 M10.2 9.6 V16.4 M5.8 13 H10.2" stroke="#e8e8e8" stroke-width="1.4"/></svg>
<svg class="abs" style="left:1569px;top:900px" width="19" height="19" viewBox="0 0 19 19"><path d="M8 1 L15 3.5 V9 C15 13 12 16 8 17.5 C4 16 1 13 1 9 V3.5 Z" fill="#2b7fd8"/><path d="M8 1 L15 3.5 V9 C15 13 12 16 8 17.5 Z" fill="#1b5fb0"/><path d="M12.5 9 L18 18 H7 Z" fill="#f5c400"/><path d="M12.5 12 V15 M12.5 16.2 V16.8" stroke="#222" stroke-width="1.2"/></svg>
<div class="abs" style="left:0;top:946px;width:1919px;height:1px;background:#a9b3bf"></div>
<div class="abs" style="left:0;top:947px;width:1919px;height:6px;background:#dde5ef"></div>
<div class="abs" style="left:1054px;top:950px;width:38px;height:4px;background:#e6aaa9;border-radius:3px 3px 0 0"></div>
<div class="abs" style="left:34px;top:951px;width:8px;height:4px;background:#9b2a2a;border-radius:4px 4px 0 0"></div>
<div class="abs" style="left:1911px;top:77px;width:7px;height:281px;background:#b4b4b4"></div>
<svg class="abs" style="left:1910px;top:54px" width="9" height="6" viewBox="0 0 9 6"><path d="M1 5 L4.5 1 L8 5 Z" fill="#9a9a9a"/></svg>
<svg class="abs" style="left:1910px;top:937px" width="9" height="6" viewBox="0 0 9 6"><path d="M1 1 L4.5 5 L8 1 Z" fill="#9a9a9a"/></svg>
</body></html>
